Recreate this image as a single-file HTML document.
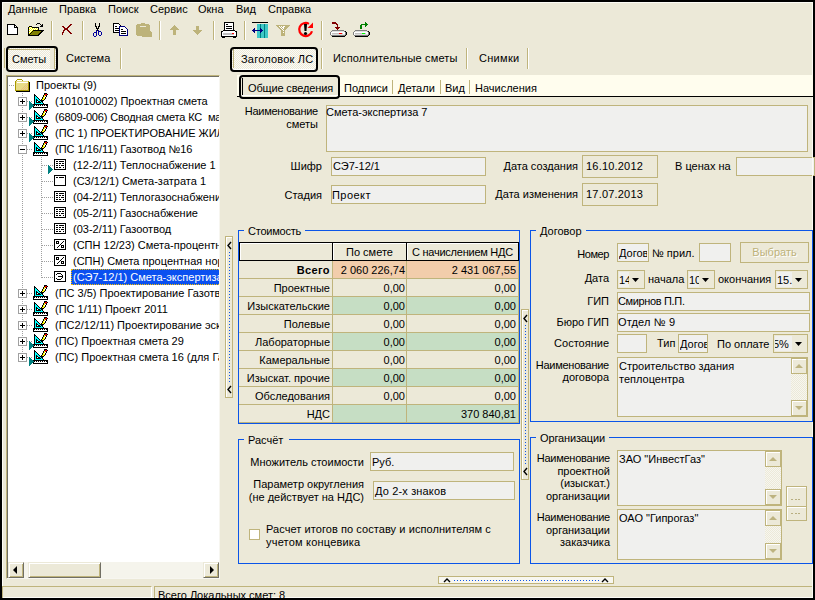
<!DOCTYPE html>
<html><head><meta charset="utf-8"><style>
html,body{margin:0;padding:0;width:815px;height:600px;overflow:hidden;background:#ECE9D8}
body div, body svg{position:absolute}
#root{position:relative;width:815px;height:600px;overflow:hidden;font-family:"Liberation Sans",sans-serif;font-size:11px;color:#000}
.t{position:absolute;white-space:nowrap;line-height:13px;height:13px}
svg{shape-rendering:geometricPrecision}
</style></head><body><div id="root">
<div style="left:0px;top:0px;width:815px;height:600px;background:#ECE9D8"></div>
<div style="left:2px;top:2px;width:811px;height:1px;background:#FCFBF5"></div>
<div style="left:2px;top:2px;width:1px;height:596px;background:#FCFBF5"></div>
<div style="left:812px;top:2px;width:1px;height:596px;background:#FCFBF5"></div>
<div style="left:2px;top:597px;width:811px;height:1px;background:#FCFBF5"></div>
<div style="left:0px;top:0px;width:815px;height:2px;background:#000"></div>
<div style="left:0px;top:598px;width:815px;height:2px;background:#000"></div>
<div style="left:0px;top:0px;width:2px;height:600px;background:#000"></div>
<div style="left:813px;top:0px;width:2px;height:600px;background:#000"></div>
<div class="t" style="left:8px;top:3px;">Данные</div>
<div class="t" style="left:59px;top:3px;">Правка</div>
<div class="t" style="left:108px;top:3px;">Поиск</div>
<div class="t" style="left:150px;top:3px;">Сервис</div>
<div class="t" style="left:198px;top:3px;">Окна</div>
<div class="t" style="left:236px;top:3px;">Вид</div>
<div class="t" style="left:268px;top:3px;">Справка</div>
<div style="left:51px;top:21px;width:1px;height:19px;background:#BFB47C"></div>
<div style="left:52px;top:21px;width:1px;height:19px;background:#FFFFFF"></div>
<div style="left:82px;top:21px;width:1px;height:19px;background:#BFB47C"></div>
<div style="left:83px;top:21px;width:1px;height:19px;background:#FFFFFF"></div>
<div style="left:159px;top:21px;width:1px;height:19px;background:#BFB47C"></div>
<div style="left:160px;top:21px;width:1px;height:19px;background:#FFFFFF"></div>
<div style="left:213px;top:21px;width:1px;height:19px;background:#BFB47C"></div>
<div style="left:214px;top:21px;width:1px;height:19px;background:#FFFFFF"></div>
<div style="left:244px;top:21px;width:1px;height:19px;background:#BFB47C"></div>
<div style="left:245px;top:21px;width:1px;height:19px;background:#FFFFFF"></div>
<div style="left:321px;top:21px;width:1px;height:19px;background:#BFB47C"></div>
<div style="left:322px;top:21px;width:1px;height:19px;background:#FFFFFF"></div>
<svg style="left:7px;top:24px" width="11" height="11" viewBox="0 0 11 11" shape-rendering="crispEdges"><rect x="0" y="0" width="8" height="1" fill="#000"/><rect x="0" y="1" width="1" height="1" fill="#000"/><rect x="1" y="1" width="6" height="1" fill="#fff"/><rect x="7" y="1" width="2" height="1" fill="#000"/><rect x="0" y="2" width="1" height="1" fill="#000"/><rect x="1" y="2" width="6" height="1" fill="#fff"/><rect x="7" y="2" width="1" height="1" fill="#000"/><rect x="8" y="2" width="1" height="1" fill="#fff"/><rect x="9" y="2" width="1" height="1" fill="#000"/><rect x="0" y="3" width="1" height="1" fill="#000"/><rect x="1" y="3" width="6" height="1" fill="#fff"/><rect x="7" y="3" width="4" height="1" fill="#000"/><rect x="0" y="4" width="1" height="1" fill="#000"/><rect x="1" y="4" width="9" height="1" fill="#fff"/><rect x="10" y="4" width="1" height="1" fill="#000"/><rect x="0" y="5" width="1" height="1" fill="#000"/><rect x="1" y="5" width="9" height="1" fill="#fff"/><rect x="10" y="5" width="1" height="1" fill="#000"/><rect x="0" y="6" width="1" height="1" fill="#000"/><rect x="1" y="6" width="9" height="1" fill="#fff"/><rect x="10" y="6" width="1" height="1" fill="#000"/><rect x="0" y="7" width="1" height="1" fill="#000"/><rect x="1" y="7" width="9" height="1" fill="#fff"/><rect x="10" y="7" width="1" height="1" fill="#000"/><rect x="0" y="8" width="1" height="1" fill="#000"/><rect x="1" y="8" width="9" height="1" fill="#fff"/><rect x="10" y="8" width="1" height="1" fill="#000"/><rect x="0" y="9" width="1" height="1" fill="#000"/><rect x="1" y="9" width="9" height="1" fill="#fff"/><rect x="10" y="9" width="1" height="1" fill="#000"/><rect x="0" y="10" width="11" height="1" fill="#000"/></svg>
<svg style="left:26px;top:23px" width="18" height="13" viewBox="0 0 18 13" shape-rendering="crispEdges"><rect x="11" y="0" width="3" height="1" fill="#000"/><rect x="10" y="1" width="1" height="1" fill="#000"/><rect x="14" y="1" width="1" height="1" fill="#000"/><rect x="16" y="1" width="1" height="1" fill="#000"/><rect x="15" y="2" width="2" height="1" fill="#000"/><rect x="3" y="3" width="3" height="1" fill="#000"/><rect x="14" y="3" width="3" height="1" fill="#000"/><rect x="2" y="4" width="1" height="1" fill="#000"/><rect x="3" y="4" width="1" height="1" fill="#FFFF00"/><rect x="4" y="4" width="1" height="1" fill="#fff"/><rect x="5" y="4" width="1" height="1" fill="#FFFF00"/><rect x="6" y="4" width="7" height="1" fill="#000"/><rect x="2" y="5" width="1" height="1" fill="#000"/><rect x="3" y="5" width="1" height="1" fill="#fff"/><rect x="4" y="5" width="1" height="1" fill="#FFFF00"/><rect x="5" y="5" width="1" height="1" fill="#fff"/><rect x="6" y="5" width="1" height="1" fill="#FFFF00"/><rect x="7" y="5" width="1" height="1" fill="#fff"/><rect x="8" y="5" width="1" height="1" fill="#FFFF00"/><rect x="9" y="5" width="1" height="1" fill="#fff"/><rect x="10" y="5" width="1" height="1" fill="#FFFF00"/><rect x="11" y="5" width="1" height="1" fill="#fff"/><rect x="12" y="5" width="1" height="1" fill="#000"/><rect x="2" y="6" width="1" height="1" fill="#000"/><rect x="3" y="6" width="1" height="1" fill="#FFFF00"/><rect x="4" y="6" width="1" height="1" fill="#fff"/><rect x="5" y="6" width="1" height="1" fill="#FFFF00"/><rect x="6" y="6" width="1" height="1" fill="#fff"/><rect x="7" y="6" width="1" height="1" fill="#FFFF00"/><rect x="8" y="6" width="1" height="1" fill="#fff"/><rect x="9" y="6" width="1" height="1" fill="#FFFF00"/><rect x="10" y="6" width="1" height="1" fill="#fff"/><rect x="11" y="6" width="1" height="1" fill="#FFFF00"/><rect x="12" y="6" width="1" height="1" fill="#000"/><rect x="2" y="7" width="1" height="1" fill="#000"/><rect x="3" y="7" width="1" height="1" fill="#fff"/><rect x="4" y="7" width="1" height="1" fill="#FFFF00"/><rect x="5" y="7" width="1" height="1" fill="#fff"/><rect x="6" y="7" width="1" height="1" fill="#FFFF00"/><rect x="7" y="7" width="11" height="1" fill="#000"/><rect x="2" y="8" width="1" height="1" fill="#000"/><rect x="3" y="8" width="1" height="1" fill="#FFFF00"/><rect x="4" y="8" width="1" height="1" fill="#fff"/><rect x="5" y="8" width="1" height="1" fill="#FFFF00"/><rect x="6" y="8" width="1" height="1" fill="#000"/><rect x="7" y="8" width="8" height="1" fill="#808000"/><rect x="15" y="8" width="2" height="1" fill="#000"/><rect x="2" y="9" width="1" height="1" fill="#000"/><rect x="3" y="9" width="1" height="1" fill="#fff"/><rect x="4" y="9" width="1" height="1" fill="#FFFF00"/><rect x="5" y="9" width="1" height="1" fill="#000"/><rect x="6" y="9" width="8" height="1" fill="#808000"/><rect x="14" y="9" width="2" height="1" fill="#000"/><rect x="2" y="10" width="1" height="1" fill="#000"/><rect x="3" y="10" width="1" height="1" fill="#FFFF00"/><rect x="4" y="10" width="1" height="1" fill="#000"/><rect x="5" y="10" width="8" height="1" fill="#808000"/><rect x="13" y="10" width="2" height="1" fill="#000"/><rect x="2" y="11" width="2" height="1" fill="#000"/><rect x="4" y="11" width="8" height="1" fill="#808000"/><rect x="12" y="11" width="2" height="1" fill="#000"/><rect x="2" y="12" width="11" height="1" fill="#000"/></svg>
<svg style="left:62px;top:24px" width="10" height="11" viewBox="0 0 10 11" shape-rendering="crispEdges"><rect x="8" y="0" width="2" height="1" fill="#800000"/><rect x="7" y="1" width="2" height="1" fill="#800000"/><rect x="0" y="2" width="2" height="1" fill="#800000"/><rect x="6" y="2" width="2" height="1" fill="#800000"/><rect x="1" y="3" width="2" height="1" fill="#800000"/><rect x="5" y="3" width="2" height="1" fill="#800000"/><rect x="2" y="4" width="4" height="1" fill="#800000"/><rect x="2" y="5" width="4" height="1" fill="#800000"/><rect x="1" y="6" width="2" height="1" fill="#800000"/><rect x="5" y="6" width="2" height="1" fill="#800000"/><rect x="1" y="7" width="1" height="1" fill="#800000"/><rect x="6" y="7" width="2" height="1" fill="#800000"/><rect x="0" y="8" width="2" height="1" fill="#800000"/><rect x="7" y="8" width="2" height="1" fill="#800000"/><rect x="0" y="9" width="1" height="1" fill="#800000"/><rect x="8" y="9" width="2" height="1" fill="#800000"/><rect x="0" y="10" width="1" height="1" fill="#800000"/></svg>
<svg style="left:93px;top:23px" width="9" height="14" viewBox="0 0 9 14" shape-rendering="crispEdges"><rect x="2" y="0" width="1" height="1" fill="#000"/><rect x="6" y="0" width="1" height="1" fill="#000"/><rect x="2" y="1" width="1" height="1" fill="#000"/><rect x="6" y="1" width="1" height="1" fill="#000"/><rect x="2" y="2" width="1" height="1" fill="#000"/><rect x="6" y="2" width="1" height="1" fill="#000"/><rect x="2" y="3" width="2" height="1" fill="#000"/><rect x="5" y="3" width="2" height="1" fill="#000"/><rect x="3" y="4" width="1" height="1" fill="#000"/><rect x="5" y="4" width="1" height="1" fill="#000"/><rect x="3" y="5" width="3" height="1" fill="#000"/><rect x="4" y="6" width="1" height="1" fill="#000"/><rect x="3" y="7" width="1" height="1" fill="#0000A0"/><rect x="4" y="7" width="1" height="1" fill="#000"/><rect x="5" y="7" width="1" height="1" fill="#0000A0"/><rect x="3" y="8" width="1" height="1" fill="#0000A0"/><rect x="5" y="8" width="3" height="1" fill="#0000A0"/><rect x="1" y="9" width="3" height="1" fill="#0000A0"/><rect x="5" y="9" width="1" height="1" fill="#0000A0"/><rect x="8" y="9" width="1" height="1" fill="#0000A0"/><rect x="0" y="10" width="1" height="1" fill="#0000A0"/><rect x="3" y="10" width="1" height="1" fill="#0000A0"/><rect x="5" y="10" width="1" height="1" fill="#0000A0"/><rect x="8" y="10" width="1" height="1" fill="#0000A0"/><rect x="0" y="11" width="1" height="1" fill="#0000A0"/><rect x="3" y="11" width="1" height="1" fill="#0000A0"/><rect x="5" y="11" width="1" height="1" fill="#0000A0"/><rect x="8" y="11" width="1" height="1" fill="#0000A0"/><rect x="0" y="12" width="1" height="1" fill="#0000A0"/><rect x="3" y="12" width="1" height="1" fill="#0000A0"/><rect x="6" y="12" width="2" height="1" fill="#0000A0"/><rect x="1" y="13" width="2" height="1" fill="#0000A0"/></svg>
<svg style="left:113px;top:23px" width="17" height="13" viewBox="0 0 17 13" shape-rendering="crispEdges"><rect x="0" y="0" width="6" height="1" fill="#000"/><rect x="0" y="1" width="1" height="1" fill="#000"/><rect x="1" y="1" width="5" height="1" fill="#fff"/><rect x="6" y="1" width="1" height="1" fill="#000"/><rect x="0" y="2" width="1" height="1" fill="#000"/><rect x="1" y="2" width="6" height="1" fill="#fff"/><rect x="7" y="2" width="1" height="1" fill="#000"/><rect x="0" y="3" width="1" height="1" fill="#000"/><rect x="1" y="3" width="1" height="1" fill="#fff"/><rect x="2" y="3" width="2" height="1" fill="#000"/><rect x="4" y="3" width="2" height="1" fill="#fff"/><rect x="6" y="3" width="6" height="1" fill="#000080"/><rect x="0" y="4" width="1" height="1" fill="#000"/><rect x="1" y="4" width="5" height="1" fill="#fff"/><rect x="6" y="4" width="1" height="1" fill="#000080"/><rect x="7" y="4" width="5" height="1" fill="#fff"/><rect x="12" y="4" width="1" height="1" fill="#000080"/><rect x="0" y="5" width="1" height="1" fill="#000"/><rect x="1" y="5" width="1" height="1" fill="#fff"/><rect x="2" y="5" width="4" height="1" fill="#000"/><rect x="6" y="5" width="1" height="1" fill="#000080"/><rect x="7" y="5" width="6" height="1" fill="#fff"/><rect x="13" y="5" width="1" height="1" fill="#000080"/><rect x="0" y="6" width="1" height="1" fill="#000"/><rect x="1" y="6" width="5" height="1" fill="#fff"/><rect x="6" y="6" width="1" height="1" fill="#000080"/><rect x="7" y="6" width="1" height="1" fill="#fff"/><rect x="8" y="6" width="2" height="1" fill="#000"/><rect x="10" y="6" width="4" height="1" fill="#fff"/><rect x="14" y="6" width="1" height="1" fill="#000080"/><rect x="0" y="7" width="1" height="1" fill="#000"/><rect x="1" y="7" width="1" height="1" fill="#fff"/><rect x="2" y="7" width="4" height="1" fill="#000"/><rect x="6" y="7" width="1" height="1" fill="#000080"/><rect x="7" y="7" width="7" height="1" fill="#fff"/><rect x="14" y="7" width="1" height="1" fill="#000080"/><rect x="0" y="8" width="1" height="1" fill="#000"/><rect x="1" y="8" width="5" height="1" fill="#fff"/><rect x="6" y="8" width="1" height="1" fill="#000080"/><rect x="7" y="8" width="1" height="1" fill="#fff"/><rect x="8" y="8" width="5" height="1" fill="#000"/><rect x="13" y="8" width="1" height="1" fill="#fff"/><rect x="14" y="8" width="1" height="1" fill="#000080"/><rect x="0" y="9" width="6" height="1" fill="#000"/><rect x="6" y="9" width="1" height="1" fill="#000080"/><rect x="7" y="9" width="7" height="1" fill="#fff"/><rect x="14" y="9" width="1" height="1" fill="#000080"/><rect x="6" y="10" width="1" height="1" fill="#000080"/><rect x="7" y="10" width="1" height="1" fill="#fff"/><rect x="8" y="10" width="5" height="1" fill="#000"/><rect x="13" y="10" width="1" height="1" fill="#fff"/><rect x="14" y="10" width="1" height="1" fill="#000080"/><rect x="6" y="11" width="1" height="1" fill="#000080"/><rect x="7" y="11" width="7" height="1" fill="#fff"/><rect x="14" y="11" width="1" height="1" fill="#000080"/><rect x="6" y="12" width="9" height="1" fill="#000080"/></svg>
<svg style="left:136px;top:23px" width="16" height="14" viewBox="0 0 16 14" shape-rendering="crispEdges"><rect x="5" y="0" width="4" height="1" fill="#BDB37A"/><rect x="1" y="1" width="12" height="1" fill="#BDB37A"/><rect x="0" y="2" width="14" height="1" fill="#BDB37A"/><rect x="0" y="3" width="4" height="1" fill="#BDB37A"/><rect x="4" y="3" width="6" height="1" fill="#ECE9D8"/><rect x="10" y="3" width="4" height="1" fill="#BDB37A"/><rect x="0" y="4" width="14" height="1" fill="#BDB37A"/><rect x="0" y="5" width="14" height="1" fill="#BDB37A"/><rect x="0" y="6" width="14" height="1" fill="#BDB37A"/><rect x="0" y="7" width="14" height="1" fill="#BDB37A"/><rect x="0" y="8" width="15" height="1" fill="#BDB37A"/><rect x="0" y="9" width="16" height="1" fill="#BDB37A"/><rect x="0" y="10" width="16" height="1" fill="#BDB37A"/><rect x="0" y="11" width="16" height="1" fill="#BDB37A"/><rect x="1" y="12" width="15" height="1" fill="#BDB37A"/><rect x="6" y="13" width="10" height="1" fill="#BDB37A"/></svg>
<svg style="left:170px;top:25px" width="9" height="10" viewBox="0 0 9 10" shape-rendering="crispEdges"><rect x="4" y="0" width="1" height="1" fill="#BDB37A"/><rect x="3" y="1" width="3" height="1" fill="#BDB37A"/><rect x="2" y="2" width="5" height="1" fill="#BDB37A"/><rect x="1" y="3" width="7" height="1" fill="#BDB37A"/><rect x="0" y="4" width="9" height="1" fill="#BDB37A"/><rect x="3" y="5" width="3" height="1" fill="#BDB37A"/><rect x="3" y="6" width="3" height="1" fill="#BDB37A"/><rect x="3" y="7" width="3" height="1" fill="#BDB37A"/><rect x="3" y="8" width="3" height="1" fill="#BDB37A"/><rect x="3" y="9" width="3" height="1" fill="#BDB37A"/></svg>
<svg style="left:193px;top:26px" width="9" height="9" viewBox="0 0 9 9" shape-rendering="crispEdges"><rect x="3" y="0" width="3" height="1" fill="#BDB37A"/><rect x="3" y="1" width="3" height="1" fill="#BDB37A"/><rect x="3" y="2" width="3" height="1" fill="#BDB37A"/><rect x="3" y="3" width="3" height="1" fill="#BDB37A"/><rect x="0" y="4" width="9" height="1" fill="#BDB37A"/><rect x="1" y="5" width="7" height="1" fill="#BDB37A"/><rect x="2" y="6" width="5" height="1" fill="#BDB37A"/><rect x="3" y="7" width="3" height="1" fill="#BDB37A"/><rect x="4" y="8" width="1" height="1" fill="#BDB37A"/></svg>
<svg style="left:221px;top:22px" width="16" height="16" viewBox="0 0 16 16" shape-rendering="crispEdges"><rect x="3" y="0" width="10" height="1" fill="#000"/><rect x="3" y="1" width="1" height="1" fill="#000"/><rect x="4" y="1" width="8" height="1" fill="#fff"/><rect x="12" y="1" width="1" height="1" fill="#000"/><rect x="3" y="2" width="1" height="1" fill="#000"/><rect x="4" y="2" width="1" height="1" fill="#fff"/><rect x="5" y="2" width="2" height="1" fill="#000"/><rect x="7" y="2" width="5" height="1" fill="#fff"/><rect x="12" y="2" width="1" height="1" fill="#000"/><rect x="3" y="3" width="1" height="1" fill="#000"/><rect x="4" y="3" width="8" height="1" fill="#fff"/><rect x="12" y="3" width="1" height="1" fill="#000"/><rect x="3" y="4" width="1" height="1" fill="#000"/><rect x="4" y="4" width="1" height="1" fill="#fff"/><rect x="5" y="4" width="6" height="1" fill="#000"/><rect x="11" y="4" width="1" height="1" fill="#fff"/><rect x="12" y="4" width="1" height="1" fill="#000"/><rect x="3" y="5" width="1" height="1" fill="#000"/><rect x="4" y="5" width="8" height="1" fill="#fff"/><rect x="12" y="5" width="1" height="1" fill="#000"/><rect x="3" y="6" width="1" height="1" fill="#000"/><rect x="4" y="6" width="1" height="1" fill="#fff"/><rect x="5" y="6" width="6" height="1" fill="#000"/><rect x="11" y="6" width="1" height="1" fill="#fff"/><rect x="12" y="6" width="1" height="1" fill="#000"/><rect x="3" y="7" width="1" height="1" fill="#000"/><rect x="4" y="7" width="8" height="1" fill="#fff"/><rect x="12" y="7" width="1" height="1" fill="#000"/><rect x="2" y="8" width="12" height="1" fill="#000"/><rect x="0" y="9" width="2" height="1" fill="#000"/><rect x="2" y="9" width="12" height="1" fill="#fff"/><rect x="14" y="9" width="2" height="1" fill="#000"/><rect x="0" y="10" width="1" height="1" fill="#000"/><rect x="1" y="10" width="14" height="1" fill="#fff"/><rect x="15" y="10" width="1" height="1" fill="#000"/><rect x="0" y="11" width="1" height="1" fill="#000"/><rect x="1" y="11" width="1" height="1" fill="#fff"/><rect x="2" y="11" width="9" height="1" fill="#C0C0C0"/><rect x="11" y="11" width="2" height="1" fill="#FF0000"/><rect x="13" y="11" width="2" height="1" fill="#fff"/><rect x="15" y="11" width="1" height="1" fill="#000"/><rect x="0" y="12" width="1" height="1" fill="#000"/><rect x="1" y="12" width="1" height="1" fill="#fff"/><rect x="2" y="12" width="11" height="1" fill="#C0C0C0"/><rect x="13" y="12" width="2" height="1" fill="#fff"/><rect x="15" y="12" width="1" height="1" fill="#000"/><rect x="0" y="13" width="1" height="1" fill="#000"/><rect x="1" y="13" width="14" height="1" fill="#fff"/><rect x="15" y="13" width="1" height="1" fill="#000"/><rect x="0" y="14" width="16" height="1" fill="#000"/><rect x="1" y="15" width="3" height="1" fill="#000"/><rect x="12" y="15" width="3" height="1" fill="#000"/></svg>
<svg style="left:252px;top:22px" width="16" height="16" viewBox="0 0 16 16" shape-rendering="crispEdges"><rect x="0" y="0" width="16" height="1" fill="#000"/><rect x="5" y="2" width="3" height="1" fill="#40C8C8"/><rect x="8" y="2" width="1" height="1" fill="#008080"/><rect x="9" y="2" width="3" height="1" fill="#40C8C8"/><rect x="12" y="2" width="1" height="1" fill="#008080"/><rect x="13" y="2" width="3" height="1" fill="#40C8C8"/><rect x="5" y="3" width="3" height="1" fill="#40C8C8"/><rect x="8" y="3" width="1" height="1" fill="#008080"/><rect x="9" y="3" width="3" height="1" fill="#40C8C8"/><rect x="12" y="3" width="1" height="1" fill="#008080"/><rect x="13" y="3" width="3" height="1" fill="#40C8C8"/><rect x="5" y="4" width="3" height="1" fill="#40C8C8"/><rect x="8" y="4" width="1" height="1" fill="#008080"/><rect x="9" y="4" width="3" height="1" fill="#40C8C8"/><rect x="12" y="4" width="1" height="1" fill="#008080"/><rect x="13" y="4" width="3" height="1" fill="#40C8C8"/><rect x="5" y="5" width="3" height="1" fill="#40C8C8"/><rect x="8" y="5" width="1" height="1" fill="#008080"/><rect x="9" y="5" width="3" height="1" fill="#40C8C8"/><rect x="12" y="5" width="1" height="1" fill="#008080"/><rect x="13" y="5" width="3" height="1" fill="#40C8C8"/><rect x="2" y="6" width="1" height="1" fill="#000080"/><rect x="5" y="6" width="3" height="1" fill="#40C8C8"/><rect x="8" y="6" width="1" height="1" fill="#000080"/><rect x="9" y="6" width="3" height="1" fill="#40C8C8"/><rect x="12" y="6" width="1" height="1" fill="#008080"/><rect x="13" y="6" width="3" height="1" fill="#40C8C8"/><rect x="1" y="7" width="2" height="1" fill="#000080"/><rect x="5" y="7" width="3" height="1" fill="#40C8C8"/><rect x="8" y="7" width="2" height="1" fill="#000080"/><rect x="10" y="7" width="2" height="1" fill="#40C8C8"/><rect x="12" y="7" width="1" height="1" fill="#008080"/><rect x="13" y="7" width="3" height="1" fill="#40C8C8"/><rect x="0" y="8" width="11" height="1" fill="#000080"/><rect x="11" y="8" width="1" height="1" fill="#40C8C8"/><rect x="12" y="8" width="1" height="1" fill="#008080"/><rect x="13" y="8" width="3" height="1" fill="#40C8C8"/><rect x="1" y="9" width="2" height="1" fill="#000080"/><rect x="5" y="9" width="3" height="1" fill="#40C8C8"/><rect x="8" y="9" width="2" height="1" fill="#000080"/><rect x="10" y="9" width="2" height="1" fill="#40C8C8"/><rect x="12" y="9" width="1" height="1" fill="#008080"/><rect x="13" y="9" width="3" height="1" fill="#40C8C8"/><rect x="2" y="10" width="1" height="1" fill="#000080"/><rect x="5" y="10" width="3" height="1" fill="#40C8C8"/><rect x="8" y="10" width="1" height="1" fill="#000080"/><rect x="9" y="10" width="3" height="1" fill="#40C8C8"/><rect x="12" y="10" width="1" height="1" fill="#008080"/><rect x="13" y="10" width="3" height="1" fill="#40C8C8"/><rect x="5" y="11" width="3" height="1" fill="#40C8C8"/><rect x="8" y="11" width="1" height="1" fill="#008080"/><rect x="9" y="11" width="3" height="1" fill="#40C8C8"/><rect x="12" y="11" width="1" height="1" fill="#008080"/><rect x="13" y="11" width="3" height="1" fill="#40C8C8"/><rect x="5" y="12" width="3" height="1" fill="#40C8C8"/><rect x="8" y="12" width="1" height="1" fill="#008080"/><rect x="9" y="12" width="3" height="1" fill="#40C8C8"/><rect x="12" y="12" width="1" height="1" fill="#008080"/><rect x="13" y="12" width="3" height="1" fill="#40C8C8"/><rect x="5" y="13" width="3" height="1" fill="#40C8C8"/><rect x="8" y="13" width="1" height="1" fill="#008080"/><rect x="9" y="13" width="3" height="1" fill="#40C8C8"/><rect x="12" y="13" width="1" height="1" fill="#008080"/><rect x="13" y="13" width="3" height="1" fill="#40C8C8"/><rect x="5" y="14" width="3" height="1" fill="#40C8C8"/><rect x="8" y="14" width="1" height="1" fill="#008080"/><rect x="9" y="14" width="3" height="1" fill="#40C8C8"/><rect x="12" y="14" width="1" height="1" fill="#008080"/><rect x="13" y="14" width="3" height="1" fill="#40C8C8"/><rect x="5" y="15" width="3" height="1" fill="#40C8C8"/><rect x="8" y="15" width="1" height="1" fill="#008080"/><rect x="9" y="15" width="3" height="1" fill="#40C8C8"/><rect x="12" y="15" width="1" height="1" fill="#008080"/><rect x="13" y="15" width="3" height="1" fill="#40C8C8"/></svg>
<svg style="left:276px;top:25px" width="14" height="11" viewBox="0 0 14 11" shape-rendering="crispEdges"><rect x="0" y="0" width="14" height="1" fill="#BDB37A"/><rect x="1" y="1" width="2" height="1" fill="#BDB37A"/><rect x="3" y="1" width="1" height="1" fill="#fff"/><rect x="4" y="1" width="1" height="1" fill="#BDB37A"/><rect x="5" y="1" width="1" height="1" fill="#fff"/><rect x="6" y="1" width="1" height="1" fill="#BDB37A"/><rect x="7" y="1" width="2" height="1" fill="#fff"/><rect x="9" y="1" width="4" height="1" fill="#BDB37A"/><rect x="2" y="2" width="2" height="1" fill="#BDB37A"/><rect x="4" y="2" width="1" height="1" fill="#fff"/><rect x="5" y="2" width="1" height="1" fill="#BDB37A"/><rect x="6" y="2" width="2" height="1" fill="#fff"/><rect x="8" y="2" width="4" height="1" fill="#BDB37A"/><rect x="3" y="3" width="2" height="1" fill="#BDB37A"/><rect x="5" y="3" width="1" height="1" fill="#fff"/><rect x="6" y="3" width="1" height="1" fill="#BDB37A"/><rect x="7" y="3" width="1" height="1" fill="#fff"/><rect x="8" y="3" width="3" height="1" fill="#BDB37A"/><rect x="4" y="4" width="2" height="1" fill="#BDB37A"/><rect x="6" y="4" width="1" height="1" fill="#fff"/><rect x="7" y="4" width="3" height="1" fill="#BDB37A"/><rect x="5" y="5" width="2" height="1" fill="#BDB37A"/><rect x="7" y="5" width="1" height="1" fill="#fff"/><rect x="8" y="5" width="1" height="1" fill="#BDB37A"/><rect x="5" y="6" width="4" height="1" fill="#BDB37A"/><rect x="5" y="7" width="2" height="1" fill="#BDB37A"/><rect x="7" y="7" width="1" height="1" fill="#fff"/><rect x="8" y="7" width="1" height="1" fill="#BDB37A"/><rect x="5" y="8" width="4" height="1" fill="#BDB37A"/><rect x="5" y="9" width="4" height="1" fill="#BDB37A"/><rect x="5" y="10" width="4" height="1" fill="#BDB37A"/></svg>
<svg style="left:296px;top:20px" width="20" height="20" viewBox="0 0 20 20"><path d="M15.98 11.18A6.5 6.5 0 1 1 12.95 3.87" fill="none" stroke="#f00" stroke-width="2.2"/><path d="M17 2.5v5.5h-5.5z" fill="#f00"/><path d="M8 4h3l-0.5 7h-2z" fill="#000"/><circle cx="9.5" cy="13.5" r="1.6" fill="#000"/></svg>
<svg style="left:330px;top:22px" width="17" height="15" viewBox="0 0 17 15" shape-rendering="crispEdges"><rect x="2" y="0" width="4" height="1" fill="#800000"/><rect x="2" y="1" width="5" height="1" fill="#800000"/><rect x="6" y="2" width="2" height="1" fill="#800000"/><rect x="7" y="3" width="1" height="1" fill="#800000"/><rect x="7" y="4" width="1" height="1" fill="#800000"/><rect x="5" y="5" width="5" height="1" fill="#800000"/><rect x="6" y="6" width="3" height="1" fill="#800000"/><rect x="7" y="7" width="1" height="1" fill="#800000"/><rect x="2" y="8" width="12" height="1" fill="#808080"/><rect x="1" y="9" width="1" height="1" fill="#808080"/><rect x="2" y="9" width="12" height="1" fill="#E0E0E0"/><rect x="14" y="9" width="1" height="1" fill="#808080"/><rect x="15" y="9" width="1" height="1" fill="#000"/><rect x="0" y="10" width="1" height="1" fill="#808080"/><rect x="1" y="10" width="14" height="1" fill="#fff"/><rect x="15" y="10" width="1" height="1" fill="#808080"/><rect x="16" y="10" width="1" height="1" fill="#000"/><rect x="0" y="11" width="1" height="1" fill="#808080"/><rect x="1" y="11" width="1" height="1" fill="#fff"/><rect x="2" y="11" width="7" height="1" fill="#C0C0C0"/><rect x="9" y="11" width="3" height="1" fill="#FF0000"/><rect x="12" y="11" width="1" height="1" fill="#C0C0C0"/><rect x="13" y="11" width="2" height="1" fill="#fff"/><rect x="15" y="11" width="1" height="1" fill="#808080"/><rect x="16" y="11" width="1" height="1" fill="#000"/><rect x="0" y="12" width="1" height="1" fill="#808080"/><rect x="1" y="12" width="1" height="1" fill="#fff"/><rect x="2" y="12" width="13" height="1" fill="#E0E0E0"/><rect x="15" y="12" width="1" height="1" fill="#808080"/><rect x="16" y="12" width="1" height="1" fill="#000"/><rect x="1" y="13" width="14" height="1" fill="#808080"/><rect x="15" y="13" width="1" height="1" fill="#000"/><rect x="2" y="14" width="13" height="1" fill="#000"/></svg>
<svg style="left:353px;top:22px" width="18" height="15" viewBox="0 0 18 15" shape-rendering="crispEdges"><rect x="12" y="0" width="1" height="1" fill="#008000"/><rect x="12" y="1" width="2" height="1" fill="#008000"/><rect x="8" y="2" width="7" height="1" fill="#008000"/><rect x="7" y="3" width="2" height="1" fill="#008000"/><rect x="12" y="3" width="2" height="1" fill="#008000"/><rect x="7" y="4" width="2" height="1" fill="#008000"/><rect x="12" y="4" width="1" height="1" fill="#008000"/><rect x="7" y="5" width="2" height="1" fill="#008000"/><rect x="7" y="6" width="2" height="1" fill="#008000"/><rect x="2" y="8" width="12" height="1" fill="#808080"/><rect x="1" y="9" width="1" height="1" fill="#808080"/><rect x="2" y="9" width="12" height="1" fill="#E0E0E0"/><rect x="14" y="9" width="1" height="1" fill="#808080"/><rect x="15" y="9" width="1" height="1" fill="#000"/><rect x="0" y="10" width="1" height="1" fill="#808080"/><rect x="1" y="10" width="14" height="1" fill="#fff"/><rect x="15" y="10" width="1" height="1" fill="#808080"/><rect x="16" y="10" width="1" height="1" fill="#000"/><rect x="0" y="11" width="1" height="1" fill="#808080"/><rect x="1" y="11" width="1" height="1" fill="#fff"/><rect x="2" y="11" width="7" height="1" fill="#C0C0C0"/><rect x="9" y="11" width="3" height="1" fill="#00FF00"/><rect x="12" y="11" width="1" height="1" fill="#C0C0C0"/><rect x="13" y="11" width="2" height="1" fill="#fff"/><rect x="15" y="11" width="1" height="1" fill="#808080"/><rect x="16" y="11" width="1" height="1" fill="#000"/><rect x="0" y="12" width="1" height="1" fill="#808080"/><rect x="1" y="12" width="1" height="1" fill="#fff"/><rect x="2" y="12" width="13" height="1" fill="#E0E0E0"/><rect x="15" y="12" width="1" height="1" fill="#808080"/><rect x="16" y="12" width="1" height="1" fill="#000"/><rect x="1" y="13" width="14" height="1" fill="#808080"/><rect x="15" y="13" width="1" height="1" fill="#000"/><rect x="2" y="14" width="13" height="1" fill="#000"/></svg>
<div style="left:8px;top:48px;width:48px;height:22px;background:repeating-conic-gradient(#ECE9D8 0 25%, #FCFBF6 0 50%) 0 0/2px 2px"></div>
<div style="left:8px;top:69px;width:48px;height:1px;background:#fff"></div>
<div style="left:8px;top:49px;width:42px;height:1px;background:#BFB47C"></div>
<div style="left:50px;top:48px;width:4px;height:21px;background:#ECE9D8"></div>
<div style="left:54px;top:48px;width:1px;height:21px;background:#BFB47C"></div>
<div style="left:6px;top:46px;width:52px;height:26px;border:2px solid #000;border-radius:4px;box-sizing:border-box"></div>
<div style="left:4px;top:48px;width:1px;height:20px;background:#BFB47C"></div>
<div class="t" style="left:12px;top:53px;">Сметы</div>
<div class="t" style="left:66px;top:52px;">Система</div>
<div style="left:120px;top:48px;width:1px;height:21px;background:#BFB47C"></div>
<div style="left:121px;top:48px;width:1px;height:21px;background:#FFFFFF"></div>
<div style="left:232px;top:49px;width:84px;height:21px;background:repeating-conic-gradient(#ECE9D8 0 25%, #FCFBF6 0 50%) 0 0/2px 2px"></div>
<div style="left:232px;top:69px;width:84px;height:1px;background:#fff"></div>
<div style="left:233px;top:49px;width:1px;height:19px;background:#BFB47C"></div>
<div style="left:230px;top:47px;width:88px;height:25px;border:2px solid #000;border-radius:4px;box-sizing:border-box"></div>
<div class="t" style="left:241px;top:53px;letter-spacing:0.2px">Заголовок ЛС</div>
<div style="left:321px;top:48px;width:1px;height:21px;background:#BFB47C"></div>
<div style="left:322px;top:48px;width:1px;height:21px;background:#FFFFFF"></div>
<div class="t" style="left:333px;top:52px;letter-spacing:0.15px">Исполнительные сметы</div>
<div style="left:466px;top:48px;width:1px;height:21px;background:#BFB47C"></div>
<div style="left:467px;top:48px;width:1px;height:21px;background:#FFFFFF"></div>
<div class="t" style="left:479px;top:52px;letter-spacing:0.3px">Снимки</div>
<div style="left:527px;top:48px;width:1px;height:21px;background:#BFB47C"></div>
<div style="left:528px;top:48px;width:1px;height:21px;background:#FFFFFF"></div>
<div style="left:237px;top:75px;width:576px;height:21px;background:#FFFDEE"></div>
<div style="left:237px;top:96px;width:576px;height:1px;background:#000"></div>
<div style="left:239px;top:75px;width:101px;height:24px;border:2px solid #000;border-radius:4px;box-sizing:border-box;background:#ECE9D8"></div>
<div style="left:242px;top:78px;width:1px;height:18px;background:#000"></div>
<div style="left:242px;top:95px;width:96px;height:1px;background:#fff"></div>
<div class="t" style="left:248px;top:82px;letter-spacing:-0.15px">Общие сведения</div>
<div class="t" style="left:344px;top:82px;">Подписи</div>
<div style="left:392px;top:80px;width:1px;height:14px;background:#BFB47C"></div>
<div class="t" style="left:398px;top:82px;">Детали</div>
<div style="left:440px;top:80px;width:1px;height:14px;background:#BFB47C"></div>
<div class="t" style="left:445px;top:82px;">Вид</div>
<div style="left:469px;top:80px;width:1px;height:14px;background:#BFB47C"></div>
<div class="t" style="left:475px;top:82px;">Начисления</div>
<div style="left:6px;top:75px;width:214px;height:504px;background:#fff;border-top:1px solid #BFB47C;border-left:1px solid #BFB47C;border-right:1px solid #F7F6F0;border-bottom:1px solid #F7F6F0;box-sizing:border-box"></div>
<div style="left:7px;top:76px;width:212px;height:1px;background:#716F64"></div>
<div style="left:7px;top:76px;width:1px;height:502px;background:#716F64"></div>
<div style="left:8px;top:77px;width:211px;height:485px;overflow:hidden">
<div style="left:1px;top:8px;width:6px;height:1px;background:repeating-linear-gradient(to right,#A0A0A0 0 1px,transparent 1px 2px)"></div>
<div style="left:14px;top:16px;width:1px;height:265px;background:repeating-linear-gradient(to bottom,#A0A0A0 0 1px,transparent 1px 2px)"></div>
<div style="left:33px;top:80px;width:1px;height:121px;background:repeating-linear-gradient(to bottom,#A0A0A0 0 1px,transparent 1px 2px)"></div>
<svg style="left:7px;top:2px" width="15" height="13" viewBox="0 0 15 13"><rect x="2" y="0" width="5" height="1" fill="#A89800"/><rect x="1" y="1" width="1" height="1" fill="#A89800"/><rect x="2" y="1" width="5" height="1" fill="#fff"/><rect x="7" y="1" width="1" height="1" fill="#A89800"/><rect x="0" y="2" width="1" height="1" fill="#A89800"/><rect x="1" y="2" width="12" height="1" fill="#E8DC88"/><rect x="13" y="2" width="1" height="1" fill="#A89800"/><rect x="0" y="3" width="1" height="1" fill="#A89800"/><rect x="1" y="3" width="1" height="1" fill="#E8DC88"/><rect x="2" y="3" width="11" height="1" fill="#fff"/><rect x="13" y="3" width="1" height="1" fill="#A89800"/><rect x="14" y="3" width="1" height="1" fill="#000"/><rect x="0" y="4" width="1" height="1" fill="#A89800"/><rect x="1" y="4" width="11" height="1" fill="#E8DC88"/><rect x="12" y="4" width="1" height="1" fill="#E8C080"/><rect x="13" y="4" width="1" height="1" fill="#A89800"/><rect x="14" y="4" width="1" height="1" fill="#000"/><rect x="0" y="5" width="1" height="1" fill="#A89800"/><rect x="1" y="5" width="10" height="1" fill="#E8DC88"/><rect x="11" y="5" width="1" height="1" fill="#E8C080"/><rect x="12" y="5" width="1" height="1" fill="#E8DC88"/><rect x="13" y="5" width="1" height="1" fill="#A89800"/><rect x="14" y="5" width="1" height="1" fill="#000"/><rect x="0" y="6" width="1" height="1" fill="#A89800"/><rect x="1" y="6" width="9" height="1" fill="#E8DC88"/><rect x="10" y="6" width="1" height="1" fill="#E8C080"/><rect x="11" y="6" width="1" height="1" fill="#E8DC88"/><rect x="12" y="6" width="1" height="1" fill="#E8C080"/><rect x="13" y="6" width="1" height="1" fill="#A89800"/><rect x="14" y="6" width="1" height="1" fill="#000"/><rect x="0" y="7" width="1" height="1" fill="#A89800"/><rect x="1" y="7" width="8" height="1" fill="#E8DC88"/><rect x="9" y="7" width="1" height="1" fill="#E8C080"/><rect x="10" y="7" width="1" height="1" fill="#E8DC88"/><rect x="11" y="7" width="1" height="1" fill="#E8C080"/><rect x="12" y="7" width="1" height="1" fill="#E8DC88"/><rect x="13" y="7" width="1" height="1" fill="#A89800"/><rect x="14" y="7" width="1" height="1" fill="#000"/><rect x="0" y="8" width="1" height="1" fill="#A89800"/><rect x="1" y="8" width="7" height="1" fill="#E8DC88"/><rect x="8" y="8" width="1" height="1" fill="#E8C080"/><rect x="9" y="8" width="1" height="1" fill="#E8DC88"/><rect x="10" y="8" width="1" height="1" fill="#E8C080"/><rect x="11" y="8" width="1" height="1" fill="#E8DC88"/><rect x="12" y="8" width="1" height="1" fill="#E8C080"/><rect x="13" y="8" width="1" height="1" fill="#A89800"/><rect x="14" y="8" width="1" height="1" fill="#000"/><rect x="0" y="9" width="1" height="1" fill="#A89800"/><rect x="1" y="9" width="6" height="1" fill="#E8DC88"/><rect x="7" y="9" width="1" height="1" fill="#E8C080"/><rect x="8" y="9" width="1" height="1" fill="#E8DC88"/><rect x="9" y="9" width="1" height="1" fill="#E8C080"/><rect x="10" y="9" width="1" height="1" fill="#E8DC88"/><rect x="11" y="9" width="1" height="1" fill="#E8C080"/><rect x="12" y="9" width="1" height="1" fill="#E8DC88"/><rect x="13" y="9" width="1" height="1" fill="#A89800"/><rect x="14" y="9" width="1" height="1" fill="#000"/><rect x="0" y="10" width="1" height="1" fill="#A89800"/><rect x="1" y="10" width="5" height="1" fill="#E8DC88"/><rect x="6" y="10" width="1" height="1" fill="#E8C080"/><rect x="7" y="10" width="1" height="1" fill="#E8DC88"/><rect x="8" y="10" width="1" height="1" fill="#E8C080"/><rect x="9" y="10" width="1" height="1" fill="#E8DC88"/><rect x="10" y="10" width="1" height="1" fill="#E8C080"/><rect x="11" y="10" width="1" height="1" fill="#E8DC88"/><rect x="12" y="10" width="1" height="1" fill="#E8C080"/><rect x="13" y="10" width="1" height="1" fill="#A89800"/><rect x="14" y="10" width="1" height="1" fill="#000"/><rect x="0" y="11" width="14" height="1" fill="#A89800"/><rect x="14" y="11" width="1" height="1" fill="#000"/><rect x="1" y="12" width="14" height="1" fill="#000"/></svg>
<div class="t" style="left:28px;top:2px;">Проекты (9)</div>
<div style="left:15px;top:24px;width:10px;height:1px;background:repeating-linear-gradient(to right,#A0A0A0 0 1px,transparent 1px 2px)"></div>
<svg style="left:10px;top:20px" width="9" height="9" viewBox="0 0 9 9"><rect x="0.5" y="0.5" width="8" height="8" fill="#fff" stroke="#A0A0A0"/><path d="M2 4.5h5" stroke="#000"/><path d="M4.5 2v5" stroke="#000"/></svg>
<svg style="left:24px;top:16px" width="16" height="15" viewBox="0 0 16 15"><rect x="12" y="0" width="3" height="1" fill="#000"/><rect x="2" y="1" width="1" height="1" fill="#000"/><rect x="12" y="1" width="1" height="1" fill="#000"/><rect x="13" y="1" width="2" height="1" fill="#FF0000"/><rect x="15" y="1" width="1" height="1" fill="#000"/><rect x="2" y="2" width="2" height="1" fill="#000"/><rect x="11" y="2" width="1" height="1" fill="#000"/><rect x="12" y="2" width="1" height="1" fill="#FFFF00"/><rect x="13" y="2" width="1" height="1" fill="#FF0000"/><rect x="14" y="2" width="1" height="1" fill="#000"/><rect x="2" y="3" width="1" height="1" fill="#000"/><rect x="3" y="3" width="1" height="1" fill="#00FFFF"/><rect x="4" y="3" width="1" height="1" fill="#000"/><rect x="11" y="3" width="1" height="1" fill="#000"/><rect x="12" y="3" width="1" height="1" fill="#FFFF00"/><rect x="13" y="3" width="1" height="1" fill="#fff"/><rect x="14" y="3" width="1" height="1" fill="#000"/><rect x="2" y="4" width="1" height="1" fill="#000"/><rect x="3" y="4" width="2" height="1" fill="#00FFFF"/><rect x="5" y="4" width="1" height="1" fill="#000"/><rect x="10" y="4" width="1" height="1" fill="#000"/><rect x="11" y="4" width="1" height="1" fill="#FFFF00"/><rect x="12" y="4" width="1" height="1" fill="#fff"/><rect x="13" y="4" width="1" height="1" fill="#000"/><rect x="2" y="5" width="1" height="1" fill="#000"/><rect x="3" y="5" width="3" height="1" fill="#00FFFF"/><rect x="6" y="5" width="1" height="1" fill="#000"/><rect x="10" y="5" width="1" height="1" fill="#000"/><rect x="11" y="5" width="2" height="1" fill="#FFFF00"/><rect x="13" y="5" width="1" height="1" fill="#000"/><rect x="2" y="6" width="1" height="1" fill="#000"/><rect x="3" y="6" width="1" height="1" fill="#00FFFF"/><rect x="4" y="6" width="1" height="1" fill="#000"/><rect x="5" y="6" width="2" height="1" fill="#00FFFF"/><rect x="7" y="6" width="1" height="1" fill="#000"/><rect x="9" y="6" width="1" height="1" fill="#000"/><rect x="10" y="6" width="2" height="1" fill="#FFFF00"/><rect x="12" y="6" width="1" height="1" fill="#000"/><rect x="2" y="7" width="1" height="1" fill="#000"/><rect x="3" y="7" width="1" height="1" fill="#00FFFF"/><rect x="4" y="7" width="2" height="1" fill="#000"/><rect x="6" y="7" width="2" height="1" fill="#00FFFF"/><rect x="8" y="7" width="4" height="1" fill="#000"/><rect x="2" y="8" width="1" height="1" fill="#000"/><rect x="3" y="8" width="1" height="1" fill="#00FFFF"/><rect x="4" y="8" width="1" height="1" fill="#000"/><rect x="5" y="8" width="1" height="1" fill="#fff"/><rect x="6" y="8" width="2" height="1" fill="#000"/><rect x="8" y="8" width="1" height="1" fill="#00FFFF"/><rect x="9" y="8" width="2" height="1" fill="#000"/><rect x="2" y="9" width="1" height="1" fill="#000"/><rect x="3" y="9" width="1" height="1" fill="#00FFFF"/><rect x="4" y="9" width="5" height="1" fill="#000"/><rect x="9" y="9" width="1" height="1" fill="#00FFFF"/><rect x="10" y="9" width="1" height="1" fill="#000"/><rect x="2" y="10" width="1" height="1" fill="#000"/><rect x="3" y="10" width="8" height="1" fill="#00FFFF"/><rect x="11" y="10" width="1" height="1" fill="#000"/><rect x="1" y="11" width="15" height="1" fill="#000"/><rect x="1" y="12" width="2" height="1" fill="#000"/><rect x="3" y="12" width="1" height="1" fill="#fff"/><rect x="4" y="12" width="1" height="1" fill="#000"/><rect x="5" y="12" width="1" height="1" fill="#fff"/><rect x="6" y="12" width="1" height="1" fill="#000"/><rect x="7" y="12" width="1" height="1" fill="#fff"/><rect x="8" y="12" width="1" height="1" fill="#000"/><rect x="9" y="12" width="1" height="1" fill="#fff"/><rect x="10" y="12" width="1" height="1" fill="#000"/><rect x="11" y="12" width="1" height="1" fill="#fff"/><rect x="12" y="12" width="1" height="1" fill="#000"/><rect x="13" y="12" width="1" height="1" fill="#fff"/><rect x="14" y="12" width="2" height="1" fill="#000"/><rect x="1" y="13" width="1" height="1" fill="#000"/><rect x="2" y="13" width="13" height="1" fill="#fff"/><rect x="15" y="13" width="1" height="1" fill="#000"/><rect x="1" y="14" width="15" height="1" fill="#000"/></svg>
<svg style="left:21px;top:24px" width="5" height="9" viewBox="0 0 5 9"><rect x="0" y="0" width="1" height="1" fill="#008080"/><rect x="0" y="1" width="2" height="1" fill="#008080"/><rect x="0" y="2" width="3" height="1" fill="#008080"/><rect x="0" y="3" width="4" height="1" fill="#008080"/><rect x="0" y="4" width="5" height="1" fill="#008080"/><rect x="0" y="5" width="4" height="1" fill="#008080"/><rect x="0" y="6" width="3" height="1" fill="#008080"/><rect x="0" y="7" width="2" height="1" fill="#008080"/><rect x="0" y="8" width="1" height="1" fill="#008080"/></svg>
<div class="t" style="left:47px;top:18px;">(101010002) Проектная смета</div>
<div style="left:15px;top:40px;width:10px;height:1px;background:repeating-linear-gradient(to right,#A0A0A0 0 1px,transparent 1px 2px)"></div>
<svg style="left:10px;top:36px" width="9" height="9" viewBox="0 0 9 9"><rect x="0.5" y="0.5" width="8" height="8" fill="#fff" stroke="#A0A0A0"/><path d="M2 4.5h5" stroke="#000"/><path d="M4.5 2v5" stroke="#000"/></svg>
<svg style="left:24px;top:32px" width="16" height="15" viewBox="0 0 16 15"><rect x="12" y="0" width="3" height="1" fill="#000"/><rect x="2" y="1" width="1" height="1" fill="#000"/><rect x="12" y="1" width="1" height="1" fill="#000"/><rect x="13" y="1" width="2" height="1" fill="#FF0000"/><rect x="15" y="1" width="1" height="1" fill="#000"/><rect x="2" y="2" width="2" height="1" fill="#000"/><rect x="11" y="2" width="1" height="1" fill="#000"/><rect x="12" y="2" width="1" height="1" fill="#FFFF00"/><rect x="13" y="2" width="1" height="1" fill="#FF0000"/><rect x="14" y="2" width="1" height="1" fill="#000"/><rect x="2" y="3" width="1" height="1" fill="#000"/><rect x="3" y="3" width="1" height="1" fill="#00FFFF"/><rect x="4" y="3" width="1" height="1" fill="#000"/><rect x="11" y="3" width="1" height="1" fill="#000"/><rect x="12" y="3" width="1" height="1" fill="#FFFF00"/><rect x="13" y="3" width="1" height="1" fill="#fff"/><rect x="14" y="3" width="1" height="1" fill="#000"/><rect x="2" y="4" width="1" height="1" fill="#000"/><rect x="3" y="4" width="2" height="1" fill="#00FFFF"/><rect x="5" y="4" width="1" height="1" fill="#000"/><rect x="10" y="4" width="1" height="1" fill="#000"/><rect x="11" y="4" width="1" height="1" fill="#FFFF00"/><rect x="12" y="4" width="1" height="1" fill="#fff"/><rect x="13" y="4" width="1" height="1" fill="#000"/><rect x="2" y="5" width="1" height="1" fill="#000"/><rect x="3" y="5" width="3" height="1" fill="#00FFFF"/><rect x="6" y="5" width="1" height="1" fill="#000"/><rect x="10" y="5" width="1" height="1" fill="#000"/><rect x="11" y="5" width="2" height="1" fill="#FFFF00"/><rect x="13" y="5" width="1" height="1" fill="#000"/><rect x="2" y="6" width="1" height="1" fill="#000"/><rect x="3" y="6" width="1" height="1" fill="#00FFFF"/><rect x="4" y="6" width="1" height="1" fill="#000"/><rect x="5" y="6" width="2" height="1" fill="#00FFFF"/><rect x="7" y="6" width="1" height="1" fill="#000"/><rect x="9" y="6" width="1" height="1" fill="#000"/><rect x="10" y="6" width="2" height="1" fill="#FFFF00"/><rect x="12" y="6" width="1" height="1" fill="#000"/><rect x="2" y="7" width="1" height="1" fill="#000"/><rect x="3" y="7" width="1" height="1" fill="#00FFFF"/><rect x="4" y="7" width="2" height="1" fill="#000"/><rect x="6" y="7" width="2" height="1" fill="#00FFFF"/><rect x="8" y="7" width="4" height="1" fill="#000"/><rect x="2" y="8" width="1" height="1" fill="#000"/><rect x="3" y="8" width="1" height="1" fill="#00FFFF"/><rect x="4" y="8" width="1" height="1" fill="#000"/><rect x="5" y="8" width="1" height="1" fill="#fff"/><rect x="6" y="8" width="2" height="1" fill="#000"/><rect x="8" y="8" width="1" height="1" fill="#00FFFF"/><rect x="9" y="8" width="2" height="1" fill="#000"/><rect x="2" y="9" width="1" height="1" fill="#000"/><rect x="3" y="9" width="1" height="1" fill="#00FFFF"/><rect x="4" y="9" width="5" height="1" fill="#000"/><rect x="9" y="9" width="1" height="1" fill="#00FFFF"/><rect x="10" y="9" width="1" height="1" fill="#000"/><rect x="2" y="10" width="1" height="1" fill="#000"/><rect x="3" y="10" width="8" height="1" fill="#00FFFF"/><rect x="11" y="10" width="1" height="1" fill="#000"/><rect x="1" y="11" width="15" height="1" fill="#000"/><rect x="1" y="12" width="2" height="1" fill="#000"/><rect x="3" y="12" width="1" height="1" fill="#fff"/><rect x="4" y="12" width="1" height="1" fill="#000"/><rect x="5" y="12" width="1" height="1" fill="#fff"/><rect x="6" y="12" width="1" height="1" fill="#000"/><rect x="7" y="12" width="1" height="1" fill="#fff"/><rect x="8" y="12" width="1" height="1" fill="#000"/><rect x="9" y="12" width="1" height="1" fill="#fff"/><rect x="10" y="12" width="1" height="1" fill="#000"/><rect x="11" y="12" width="1" height="1" fill="#fff"/><rect x="12" y="12" width="1" height="1" fill="#000"/><rect x="13" y="12" width="1" height="1" fill="#fff"/><rect x="14" y="12" width="2" height="1" fill="#000"/><rect x="1" y="13" width="1" height="1" fill="#000"/><rect x="2" y="13" width="13" height="1" fill="#fff"/><rect x="15" y="13" width="1" height="1" fill="#000"/><rect x="1" y="14" width="15" height="1" fill="#000"/></svg>
<svg style="left:21px;top:40px" width="5" height="9" viewBox="0 0 5 9"><rect x="0" y="0" width="1" height="1" fill="#008080"/><rect x="0" y="1" width="2" height="1" fill="#008080"/><rect x="0" y="2" width="3" height="1" fill="#008080"/><rect x="0" y="3" width="4" height="1" fill="#008080"/><rect x="0" y="4" width="5" height="1" fill="#008080"/><rect x="0" y="5" width="4" height="1" fill="#008080"/><rect x="0" y="6" width="3" height="1" fill="#008080"/><rect x="0" y="7" width="2" height="1" fill="#008080"/><rect x="0" y="8" width="1" height="1" fill="#008080"/></svg>
<div class="t" style="left:47px;top:34px;"><span style="letter-spacing:-0.15px">(6809-006) Сводная смета КС &nbsp;макет</span></div>
<div style="left:15px;top:56px;width:10px;height:1px;background:repeating-linear-gradient(to right,#A0A0A0 0 1px,transparent 1px 2px)"></div>
<svg style="left:10px;top:52px" width="9" height="9" viewBox="0 0 9 9"><rect x="0.5" y="0.5" width="8" height="8" fill="#fff" stroke="#A0A0A0"/><path d="M2 4.5h5" stroke="#000"/><path d="M4.5 2v5" stroke="#000"/></svg>
<svg style="left:24px;top:48px" width="16" height="15" viewBox="0 0 16 15"><rect x="12" y="0" width="3" height="1" fill="#000"/><rect x="2" y="1" width="1" height="1" fill="#000"/><rect x="12" y="1" width="1" height="1" fill="#000"/><rect x="13" y="1" width="2" height="1" fill="#FF0000"/><rect x="15" y="1" width="1" height="1" fill="#000"/><rect x="2" y="2" width="2" height="1" fill="#000"/><rect x="11" y="2" width="1" height="1" fill="#000"/><rect x="12" y="2" width="1" height="1" fill="#FFFF00"/><rect x="13" y="2" width="1" height="1" fill="#FF0000"/><rect x="14" y="2" width="1" height="1" fill="#000"/><rect x="2" y="3" width="1" height="1" fill="#000"/><rect x="3" y="3" width="1" height="1" fill="#00FFFF"/><rect x="4" y="3" width="1" height="1" fill="#000"/><rect x="11" y="3" width="1" height="1" fill="#000"/><rect x="12" y="3" width="1" height="1" fill="#FFFF00"/><rect x="13" y="3" width="1" height="1" fill="#fff"/><rect x="14" y="3" width="1" height="1" fill="#000"/><rect x="2" y="4" width="1" height="1" fill="#000"/><rect x="3" y="4" width="2" height="1" fill="#00FFFF"/><rect x="5" y="4" width="1" height="1" fill="#000"/><rect x="10" y="4" width="1" height="1" fill="#000"/><rect x="11" y="4" width="1" height="1" fill="#FFFF00"/><rect x="12" y="4" width="1" height="1" fill="#fff"/><rect x="13" y="4" width="1" height="1" fill="#000"/><rect x="2" y="5" width="1" height="1" fill="#000"/><rect x="3" y="5" width="3" height="1" fill="#00FFFF"/><rect x="6" y="5" width="1" height="1" fill="#000"/><rect x="10" y="5" width="1" height="1" fill="#000"/><rect x="11" y="5" width="2" height="1" fill="#FFFF00"/><rect x="13" y="5" width="1" height="1" fill="#000"/><rect x="2" y="6" width="1" height="1" fill="#000"/><rect x="3" y="6" width="1" height="1" fill="#00FFFF"/><rect x="4" y="6" width="1" height="1" fill="#000"/><rect x="5" y="6" width="2" height="1" fill="#00FFFF"/><rect x="7" y="6" width="1" height="1" fill="#000"/><rect x="9" y="6" width="1" height="1" fill="#000"/><rect x="10" y="6" width="2" height="1" fill="#FFFF00"/><rect x="12" y="6" width="1" height="1" fill="#000"/><rect x="2" y="7" width="1" height="1" fill="#000"/><rect x="3" y="7" width="1" height="1" fill="#00FFFF"/><rect x="4" y="7" width="2" height="1" fill="#000"/><rect x="6" y="7" width="2" height="1" fill="#00FFFF"/><rect x="8" y="7" width="4" height="1" fill="#000"/><rect x="2" y="8" width="1" height="1" fill="#000"/><rect x="3" y="8" width="1" height="1" fill="#00FFFF"/><rect x="4" y="8" width="1" height="1" fill="#000"/><rect x="5" y="8" width="1" height="1" fill="#fff"/><rect x="6" y="8" width="2" height="1" fill="#000"/><rect x="8" y="8" width="1" height="1" fill="#00FFFF"/><rect x="9" y="8" width="2" height="1" fill="#000"/><rect x="2" y="9" width="1" height="1" fill="#000"/><rect x="3" y="9" width="1" height="1" fill="#00FFFF"/><rect x="4" y="9" width="5" height="1" fill="#000"/><rect x="9" y="9" width="1" height="1" fill="#00FFFF"/><rect x="10" y="9" width="1" height="1" fill="#000"/><rect x="2" y="10" width="1" height="1" fill="#000"/><rect x="3" y="10" width="8" height="1" fill="#00FFFF"/><rect x="11" y="10" width="1" height="1" fill="#000"/><rect x="1" y="11" width="15" height="1" fill="#000"/><rect x="1" y="12" width="2" height="1" fill="#000"/><rect x="3" y="12" width="1" height="1" fill="#fff"/><rect x="4" y="12" width="1" height="1" fill="#000"/><rect x="5" y="12" width="1" height="1" fill="#fff"/><rect x="6" y="12" width="1" height="1" fill="#000"/><rect x="7" y="12" width="1" height="1" fill="#fff"/><rect x="8" y="12" width="1" height="1" fill="#000"/><rect x="9" y="12" width="1" height="1" fill="#fff"/><rect x="10" y="12" width="1" height="1" fill="#000"/><rect x="11" y="12" width="1" height="1" fill="#fff"/><rect x="12" y="12" width="1" height="1" fill="#000"/><rect x="13" y="12" width="1" height="1" fill="#fff"/><rect x="14" y="12" width="2" height="1" fill="#000"/><rect x="1" y="13" width="1" height="1" fill="#000"/><rect x="2" y="13" width="13" height="1" fill="#fff"/><rect x="15" y="13" width="1" height="1" fill="#000"/><rect x="1" y="14" width="15" height="1" fill="#000"/></svg>
<svg style="left:21px;top:56px" width="5" height="9" viewBox="0 0 5 9"><rect x="0" y="0" width="1" height="1" fill="#008080"/><rect x="0" y="1" width="2" height="1" fill="#008080"/><rect x="0" y="2" width="3" height="1" fill="#008080"/><rect x="0" y="3" width="4" height="1" fill="#008080"/><rect x="0" y="4" width="5" height="1" fill="#008080"/><rect x="0" y="5" width="4" height="1" fill="#008080"/><rect x="0" y="6" width="3" height="1" fill="#008080"/><rect x="0" y="7" width="2" height="1" fill="#008080"/><rect x="0" y="8" width="1" height="1" fill="#008080"/></svg>
<div class="t" style="left:47px;top:50px;">(ПС 1) ПРОЕКТИРОВАНИЕ ЖИЛОГО</div>
<div style="left:15px;top:72px;width:10px;height:1px;background:repeating-linear-gradient(to right,#A0A0A0 0 1px,transparent 1px 2px)"></div>
<svg style="left:10px;top:68px" width="9" height="9" viewBox="0 0 9 9"><rect x="0.5" y="0.5" width="8" height="8" fill="#fff" stroke="#A0A0A0"/><path d="M2 4.5h5" stroke="#000"/></svg>
<svg style="left:24px;top:64px" width="16" height="15" viewBox="0 0 16 15"><rect x="12" y="0" width="3" height="1" fill="#000"/><rect x="2" y="1" width="1" height="1" fill="#000"/><rect x="12" y="1" width="1" height="1" fill="#000"/><rect x="13" y="1" width="2" height="1" fill="#FF0000"/><rect x="15" y="1" width="1" height="1" fill="#000"/><rect x="2" y="2" width="2" height="1" fill="#000"/><rect x="11" y="2" width="1" height="1" fill="#000"/><rect x="12" y="2" width="1" height="1" fill="#FFFF00"/><rect x="13" y="2" width="1" height="1" fill="#FF0000"/><rect x="14" y="2" width="1" height="1" fill="#000"/><rect x="2" y="3" width="1" height="1" fill="#000"/><rect x="3" y="3" width="1" height="1" fill="#00FFFF"/><rect x="4" y="3" width="1" height="1" fill="#000"/><rect x="11" y="3" width="1" height="1" fill="#000"/><rect x="12" y="3" width="1" height="1" fill="#FFFF00"/><rect x="13" y="3" width="1" height="1" fill="#fff"/><rect x="14" y="3" width="1" height="1" fill="#000"/><rect x="2" y="4" width="1" height="1" fill="#000"/><rect x="3" y="4" width="2" height="1" fill="#00FFFF"/><rect x="5" y="4" width="1" height="1" fill="#000"/><rect x="10" y="4" width="1" height="1" fill="#000"/><rect x="11" y="4" width="1" height="1" fill="#FFFF00"/><rect x="12" y="4" width="1" height="1" fill="#fff"/><rect x="13" y="4" width="1" height="1" fill="#000"/><rect x="2" y="5" width="1" height="1" fill="#000"/><rect x="3" y="5" width="3" height="1" fill="#00FFFF"/><rect x="6" y="5" width="1" height="1" fill="#000"/><rect x="10" y="5" width="1" height="1" fill="#000"/><rect x="11" y="5" width="2" height="1" fill="#FFFF00"/><rect x="13" y="5" width="1" height="1" fill="#000"/><rect x="2" y="6" width="1" height="1" fill="#000"/><rect x="3" y="6" width="1" height="1" fill="#00FFFF"/><rect x="4" y="6" width="1" height="1" fill="#000"/><rect x="5" y="6" width="2" height="1" fill="#00FFFF"/><rect x="7" y="6" width="1" height="1" fill="#000"/><rect x="9" y="6" width="1" height="1" fill="#000"/><rect x="10" y="6" width="2" height="1" fill="#FFFF00"/><rect x="12" y="6" width="1" height="1" fill="#000"/><rect x="2" y="7" width="1" height="1" fill="#000"/><rect x="3" y="7" width="1" height="1" fill="#00FFFF"/><rect x="4" y="7" width="2" height="1" fill="#000"/><rect x="6" y="7" width="2" height="1" fill="#00FFFF"/><rect x="8" y="7" width="4" height="1" fill="#000"/><rect x="2" y="8" width="1" height="1" fill="#000"/><rect x="3" y="8" width="1" height="1" fill="#00FFFF"/><rect x="4" y="8" width="1" height="1" fill="#000"/><rect x="5" y="8" width="1" height="1" fill="#fff"/><rect x="6" y="8" width="2" height="1" fill="#000"/><rect x="8" y="8" width="1" height="1" fill="#00FFFF"/><rect x="9" y="8" width="2" height="1" fill="#000"/><rect x="2" y="9" width="1" height="1" fill="#000"/><rect x="3" y="9" width="1" height="1" fill="#00FFFF"/><rect x="4" y="9" width="5" height="1" fill="#000"/><rect x="9" y="9" width="1" height="1" fill="#00FFFF"/><rect x="10" y="9" width="1" height="1" fill="#000"/><rect x="2" y="10" width="1" height="1" fill="#000"/><rect x="3" y="10" width="8" height="1" fill="#00FFFF"/><rect x="11" y="10" width="1" height="1" fill="#000"/><rect x="1" y="11" width="15" height="1" fill="#000"/><rect x="1" y="12" width="2" height="1" fill="#000"/><rect x="3" y="12" width="1" height="1" fill="#fff"/><rect x="4" y="12" width="1" height="1" fill="#000"/><rect x="5" y="12" width="1" height="1" fill="#fff"/><rect x="6" y="12" width="1" height="1" fill="#000"/><rect x="7" y="12" width="1" height="1" fill="#fff"/><rect x="8" y="12" width="1" height="1" fill="#000"/><rect x="9" y="12" width="1" height="1" fill="#fff"/><rect x="10" y="12" width="1" height="1" fill="#000"/><rect x="11" y="12" width="1" height="1" fill="#fff"/><rect x="12" y="12" width="1" height="1" fill="#000"/><rect x="13" y="12" width="1" height="1" fill="#fff"/><rect x="14" y="12" width="2" height="1" fill="#000"/><rect x="1" y="13" width="1" height="1" fill="#000"/><rect x="2" y="13" width="13" height="1" fill="#fff"/><rect x="15" y="13" width="1" height="1" fill="#000"/><rect x="1" y="14" width="15" height="1" fill="#000"/></svg>
<div class="t" style="left:47px;top:66px;">(ПС 1/16/11) Газотвод №16</div>
<div style="left:34px;top:88px;width:12px;height:1px;background:repeating-linear-gradient(to right,#A0A0A0 0 1px,transparent 1px 2px)"></div>
<svg style="left:46px;top:82px" width="12" height="11" viewBox="0 0 12 11"><rect x="0" y="0" width="12" height="1" fill="#000"/><rect x="0" y="1" width="1" height="1" fill="#000"/><rect x="1" y="1" width="10" height="1" fill="#fff"/><rect x="11" y="1" width="1" height="1" fill="#000"/><rect x="0" y="2" width="1" height="1" fill="#000"/><rect x="1" y="2" width="1" height="1" fill="#fff"/><rect x="2" y="2" width="2" height="1" fill="#000"/><rect x="4" y="2" width="1" height="1" fill="#fff"/><rect x="5" y="2" width="5" height="1" fill="#000"/><rect x="10" y="2" width="1" height="1" fill="#fff"/><rect x="11" y="2" width="1" height="1" fill="#000"/><rect x="0" y="3" width="1" height="1" fill="#000"/><rect x="1" y="3" width="10" height="1" fill="#fff"/><rect x="11" y="3" width="1" height="1" fill="#000"/><rect x="0" y="4" width="1" height="1" fill="#000"/><rect x="1" y="4" width="1" height="1" fill="#fff"/><rect x="2" y="4" width="2" height="1" fill="#000"/><rect x="4" y="4" width="1" height="1" fill="#fff"/><rect x="5" y="4" width="2" height="1" fill="#000"/><rect x="7" y="4" width="1" height="1" fill="#fff"/><rect x="8" y="4" width="2" height="1" fill="#000"/><rect x="10" y="4" width="1" height="1" fill="#fff"/><rect x="11" y="4" width="1" height="1" fill="#000"/><rect x="0" y="5" width="1" height="1" fill="#000"/><rect x="1" y="5" width="10" height="1" fill="#fff"/><rect x="11" y="5" width="1" height="1" fill="#000"/><rect x="0" y="6" width="1" height="1" fill="#000"/><rect x="1" y="6" width="1" height="1" fill="#fff"/><rect x="2" y="6" width="2" height="1" fill="#000"/><rect x="4" y="6" width="1" height="1" fill="#fff"/><rect x="5" y="6" width="1" height="1" fill="#000"/><rect x="6" y="6" width="1" height="1" fill="#fff"/><rect x="7" y="6" width="3" height="1" fill="#000"/><rect x="10" y="6" width="1" height="1" fill="#fff"/><rect x="11" y="6" width="1" height="1" fill="#000"/><rect x="0" y="7" width="1" height="1" fill="#000"/><rect x="1" y="7" width="10" height="1" fill="#fff"/><rect x="11" y="7" width="1" height="1" fill="#000"/><rect x="0" y="8" width="1" height="1" fill="#000"/><rect x="1" y="8" width="1" height="1" fill="#fff"/><rect x="2" y="8" width="2" height="1" fill="#000"/><rect x="4" y="8" width="1" height="1" fill="#fff"/><rect x="5" y="8" width="2" height="1" fill="#000"/><rect x="7" y="8" width="2" height="1" fill="#fff"/><rect x="9" y="8" width="1" height="1" fill="#000"/><rect x="10" y="8" width="1" height="1" fill="#fff"/><rect x="11" y="8" width="1" height="1" fill="#000"/><rect x="0" y="9" width="1" height="1" fill="#000"/><rect x="1" y="9" width="10" height="1" fill="#fff"/><rect x="11" y="9" width="1" height="1" fill="#000"/><rect x="0" y="10" width="12" height="1" fill="#000"/></svg>
<svg style="left:40px;top:88px" width="5" height="9" viewBox="0 0 5 9"><rect x="0" y="0" width="1" height="1" fill="#008080"/><rect x="0" y="1" width="2" height="1" fill="#008080"/><rect x="0" y="2" width="3" height="1" fill="#008080"/><rect x="0" y="3" width="4" height="1" fill="#008080"/><rect x="0" y="4" width="5" height="1" fill="#008080"/><rect x="0" y="5" width="4" height="1" fill="#008080"/><rect x="0" y="6" width="3" height="1" fill="#008080"/><rect x="0" y="7" width="2" height="1" fill="#008080"/><rect x="0" y="8" width="1" height="1" fill="#008080"/></svg>
<div class="t" style="left:65px;top:82px;">(12-2/11) Теплоснабжение 1</div>
<div style="left:34px;top:104px;width:12px;height:1px;background:repeating-linear-gradient(to right,#A0A0A0 0 1px,transparent 1px 2px)"></div>
<svg style="left:46px;top:98px" width="12" height="11" viewBox="0 0 12 11"><rect x="0" y="0" width="12" height="1" fill="#000"/><rect x="0" y="1" width="1" height="1" fill="#000"/><rect x="1" y="1" width="10" height="1" fill="#fff"/><rect x="11" y="1" width="1" height="1" fill="#000"/><rect x="0" y="2" width="1" height="1" fill="#000"/><rect x="1" y="2" width="1" height="1" fill="#fff"/><rect x="2" y="2" width="2" height="1" fill="#000"/><rect x="4" y="2" width="1" height="1" fill="#fff"/><rect x="5" y="2" width="5" height="1" fill="#000"/><rect x="10" y="2" width="1" height="1" fill="#fff"/><rect x="11" y="2" width="1" height="1" fill="#000"/><rect x="0" y="3" width="1" height="1" fill="#000"/><rect x="1" y="3" width="10" height="1" fill="#fff"/><rect x="11" y="3" width="1" height="1" fill="#000"/><rect x="0" y="4" width="1" height="1" fill="#000"/><rect x="1" y="4" width="10" height="1" fill="#fff"/><rect x="11" y="4" width="1" height="1" fill="#000"/><rect x="0" y="5" width="1" height="1" fill="#000"/><rect x="1" y="5" width="10" height="1" fill="#fff"/><rect x="11" y="5" width="1" height="1" fill="#000"/><rect x="0" y="6" width="1" height="1" fill="#000"/><rect x="1" y="6" width="10" height="1" fill="#fff"/><rect x="11" y="6" width="1" height="1" fill="#000"/><rect x="0" y="7" width="1" height="1" fill="#000"/><rect x="1" y="7" width="10" height="1" fill="#fff"/><rect x="11" y="7" width="1" height="1" fill="#000"/><rect x="0" y="8" width="1" height="1" fill="#000"/><rect x="1" y="8" width="10" height="1" fill="#fff"/><rect x="11" y="8" width="1" height="1" fill="#000"/><rect x="0" y="9" width="1" height="1" fill="#000"/><rect x="1" y="9" width="10" height="1" fill="#fff"/><rect x="11" y="9" width="1" height="1" fill="#000"/><rect x="0" y="10" width="12" height="1" fill="#000"/></svg>
<div class="t" style="left:65px;top:98px;">(С3/12/1) Смета-затрата 1</div>
<div style="left:34px;top:120px;width:12px;height:1px;background:repeating-linear-gradient(to right,#A0A0A0 0 1px,transparent 1px 2px)"></div>
<svg style="left:46px;top:114px" width="12" height="11" viewBox="0 0 12 11"><rect x="0" y="0" width="12" height="1" fill="#000"/><rect x="0" y="1" width="1" height="1" fill="#000"/><rect x="1" y="1" width="10" height="1" fill="#fff"/><rect x="11" y="1" width="1" height="1" fill="#000"/><rect x="0" y="2" width="1" height="1" fill="#000"/><rect x="1" y="2" width="1" height="1" fill="#fff"/><rect x="2" y="2" width="2" height="1" fill="#000"/><rect x="4" y="2" width="1" height="1" fill="#fff"/><rect x="5" y="2" width="5" height="1" fill="#000"/><rect x="10" y="2" width="1" height="1" fill="#fff"/><rect x="11" y="2" width="1" height="1" fill="#000"/><rect x="0" y="3" width="1" height="1" fill="#000"/><rect x="1" y="3" width="10" height="1" fill="#fff"/><rect x="11" y="3" width="1" height="1" fill="#000"/><rect x="0" y="4" width="1" height="1" fill="#000"/><rect x="1" y="4" width="1" height="1" fill="#fff"/><rect x="2" y="4" width="2" height="1" fill="#000"/><rect x="4" y="4" width="1" height="1" fill="#fff"/><rect x="5" y="4" width="2" height="1" fill="#000"/><rect x="7" y="4" width="1" height="1" fill="#fff"/><rect x="8" y="4" width="2" height="1" fill="#000"/><rect x="10" y="4" width="1" height="1" fill="#fff"/><rect x="11" y="4" width="1" height="1" fill="#000"/><rect x="0" y="5" width="1" height="1" fill="#000"/><rect x="1" y="5" width="10" height="1" fill="#fff"/><rect x="11" y="5" width="1" height="1" fill="#000"/><rect x="0" y="6" width="1" height="1" fill="#000"/><rect x="1" y="6" width="1" height="1" fill="#fff"/><rect x="2" y="6" width="2" height="1" fill="#000"/><rect x="4" y="6" width="1" height="1" fill="#fff"/><rect x="5" y="6" width="1" height="1" fill="#000"/><rect x="6" y="6" width="1" height="1" fill="#fff"/><rect x="7" y="6" width="3" height="1" fill="#000"/><rect x="10" y="6" width="1" height="1" fill="#fff"/><rect x="11" y="6" width="1" height="1" fill="#000"/><rect x="0" y="7" width="1" height="1" fill="#000"/><rect x="1" y="7" width="10" height="1" fill="#fff"/><rect x="11" y="7" width="1" height="1" fill="#000"/><rect x="0" y="8" width="1" height="1" fill="#000"/><rect x="1" y="8" width="1" height="1" fill="#fff"/><rect x="2" y="8" width="2" height="1" fill="#000"/><rect x="4" y="8" width="1" height="1" fill="#fff"/><rect x="5" y="8" width="2" height="1" fill="#000"/><rect x="7" y="8" width="2" height="1" fill="#fff"/><rect x="9" y="8" width="1" height="1" fill="#000"/><rect x="10" y="8" width="1" height="1" fill="#fff"/><rect x="11" y="8" width="1" height="1" fill="#000"/><rect x="0" y="9" width="1" height="1" fill="#000"/><rect x="1" y="9" width="10" height="1" fill="#fff"/><rect x="11" y="9" width="1" height="1" fill="#000"/><rect x="0" y="10" width="12" height="1" fill="#000"/></svg>
<div class="t" style="left:65px;top:114px;">(04-2/11) Теплогазоснабжение</div>
<div style="left:34px;top:136px;width:12px;height:1px;background:repeating-linear-gradient(to right,#A0A0A0 0 1px,transparent 1px 2px)"></div>
<svg style="left:46px;top:130px" width="12" height="11" viewBox="0 0 12 11"><rect x="0" y="0" width="12" height="1" fill="#000"/><rect x="0" y="1" width="1" height="1" fill="#000"/><rect x="1" y="1" width="10" height="1" fill="#fff"/><rect x="11" y="1" width="1" height="1" fill="#000"/><rect x="0" y="2" width="1" height="1" fill="#000"/><rect x="1" y="2" width="1" height="1" fill="#fff"/><rect x="2" y="2" width="2" height="1" fill="#000"/><rect x="4" y="2" width="1" height="1" fill="#fff"/><rect x="5" y="2" width="5" height="1" fill="#000"/><rect x="10" y="2" width="1" height="1" fill="#fff"/><rect x="11" y="2" width="1" height="1" fill="#000"/><rect x="0" y="3" width="1" height="1" fill="#000"/><rect x="1" y="3" width="10" height="1" fill="#fff"/><rect x="11" y="3" width="1" height="1" fill="#000"/><rect x="0" y="4" width="1" height="1" fill="#000"/><rect x="1" y="4" width="1" height="1" fill="#fff"/><rect x="2" y="4" width="2" height="1" fill="#000"/><rect x="4" y="4" width="1" height="1" fill="#fff"/><rect x="5" y="4" width="2" height="1" fill="#000"/><rect x="7" y="4" width="1" height="1" fill="#fff"/><rect x="8" y="4" width="2" height="1" fill="#000"/><rect x="10" y="4" width="1" height="1" fill="#fff"/><rect x="11" y="4" width="1" height="1" fill="#000"/><rect x="0" y="5" width="1" height="1" fill="#000"/><rect x="1" y="5" width="10" height="1" fill="#fff"/><rect x="11" y="5" width="1" height="1" fill="#000"/><rect x="0" y="6" width="1" height="1" fill="#000"/><rect x="1" y="6" width="1" height="1" fill="#fff"/><rect x="2" y="6" width="2" height="1" fill="#000"/><rect x="4" y="6" width="1" height="1" fill="#fff"/><rect x="5" y="6" width="1" height="1" fill="#000"/><rect x="6" y="6" width="1" height="1" fill="#fff"/><rect x="7" y="6" width="3" height="1" fill="#000"/><rect x="10" y="6" width="1" height="1" fill="#fff"/><rect x="11" y="6" width="1" height="1" fill="#000"/><rect x="0" y="7" width="1" height="1" fill="#000"/><rect x="1" y="7" width="10" height="1" fill="#fff"/><rect x="11" y="7" width="1" height="1" fill="#000"/><rect x="0" y="8" width="1" height="1" fill="#000"/><rect x="1" y="8" width="1" height="1" fill="#fff"/><rect x="2" y="8" width="2" height="1" fill="#000"/><rect x="4" y="8" width="1" height="1" fill="#fff"/><rect x="5" y="8" width="2" height="1" fill="#000"/><rect x="7" y="8" width="2" height="1" fill="#fff"/><rect x="9" y="8" width="1" height="1" fill="#000"/><rect x="10" y="8" width="1" height="1" fill="#fff"/><rect x="11" y="8" width="1" height="1" fill="#000"/><rect x="0" y="9" width="1" height="1" fill="#000"/><rect x="1" y="9" width="10" height="1" fill="#fff"/><rect x="11" y="9" width="1" height="1" fill="#000"/><rect x="0" y="10" width="12" height="1" fill="#000"/></svg>
<div class="t" style="left:65px;top:130px;">(05-2/11) Газоснабжение</div>
<div style="left:34px;top:152px;width:12px;height:1px;background:repeating-linear-gradient(to right,#A0A0A0 0 1px,transparent 1px 2px)"></div>
<svg style="left:46px;top:146px" width="12" height="11" viewBox="0 0 12 11"><rect x="0" y="0" width="12" height="1" fill="#000"/><rect x="0" y="1" width="1" height="1" fill="#000"/><rect x="1" y="1" width="10" height="1" fill="#fff"/><rect x="11" y="1" width="1" height="1" fill="#000"/><rect x="0" y="2" width="1" height="1" fill="#000"/><rect x="1" y="2" width="1" height="1" fill="#fff"/><rect x="2" y="2" width="2" height="1" fill="#000"/><rect x="4" y="2" width="1" height="1" fill="#fff"/><rect x="5" y="2" width="5" height="1" fill="#000"/><rect x="10" y="2" width="1" height="1" fill="#fff"/><rect x="11" y="2" width="1" height="1" fill="#000"/><rect x="0" y="3" width="1" height="1" fill="#000"/><rect x="1" y="3" width="10" height="1" fill="#fff"/><rect x="11" y="3" width="1" height="1" fill="#000"/><rect x="0" y="4" width="1" height="1" fill="#000"/><rect x="1" y="4" width="1" height="1" fill="#fff"/><rect x="2" y="4" width="2" height="1" fill="#000"/><rect x="4" y="4" width="1" height="1" fill="#fff"/><rect x="5" y="4" width="2" height="1" fill="#000"/><rect x="7" y="4" width="1" height="1" fill="#fff"/><rect x="8" y="4" width="2" height="1" fill="#000"/><rect x="10" y="4" width="1" height="1" fill="#fff"/><rect x="11" y="4" width="1" height="1" fill="#000"/><rect x="0" y="5" width="1" height="1" fill="#000"/><rect x="1" y="5" width="10" height="1" fill="#fff"/><rect x="11" y="5" width="1" height="1" fill="#000"/><rect x="0" y="6" width="1" height="1" fill="#000"/><rect x="1" y="6" width="1" height="1" fill="#fff"/><rect x="2" y="6" width="2" height="1" fill="#000"/><rect x="4" y="6" width="1" height="1" fill="#fff"/><rect x="5" y="6" width="1" height="1" fill="#000"/><rect x="6" y="6" width="1" height="1" fill="#fff"/><rect x="7" y="6" width="3" height="1" fill="#000"/><rect x="10" y="6" width="1" height="1" fill="#fff"/><rect x="11" y="6" width="1" height="1" fill="#000"/><rect x="0" y="7" width="1" height="1" fill="#000"/><rect x="1" y="7" width="10" height="1" fill="#fff"/><rect x="11" y="7" width="1" height="1" fill="#000"/><rect x="0" y="8" width="1" height="1" fill="#000"/><rect x="1" y="8" width="1" height="1" fill="#fff"/><rect x="2" y="8" width="2" height="1" fill="#000"/><rect x="4" y="8" width="1" height="1" fill="#fff"/><rect x="5" y="8" width="2" height="1" fill="#000"/><rect x="7" y="8" width="2" height="1" fill="#fff"/><rect x="9" y="8" width="1" height="1" fill="#000"/><rect x="10" y="8" width="1" height="1" fill="#fff"/><rect x="11" y="8" width="1" height="1" fill="#000"/><rect x="0" y="9" width="1" height="1" fill="#000"/><rect x="1" y="9" width="10" height="1" fill="#fff"/><rect x="11" y="9" width="1" height="1" fill="#000"/><rect x="0" y="10" width="12" height="1" fill="#000"/></svg>
<div class="t" style="left:65px;top:146px;">(03-2/11) Газоотвод</div>
<div style="left:34px;top:168px;width:12px;height:1px;background:repeating-linear-gradient(to right,#A0A0A0 0 1px,transparent 1px 2px)"></div>
<svg style="left:46px;top:162px" width="12" height="11" viewBox="0 0 12 11"><rect x="0" y="0" width="12" height="1" fill="#000"/><rect x="0" y="1" width="1" height="1" fill="#000"/><rect x="1" y="1" width="10" height="1" fill="#fff"/><rect x="11" y="1" width="1" height="1" fill="#000"/><rect x="0" y="2" width="1" height="1" fill="#000"/><rect x="1" y="2" width="1" height="1" fill="#fff"/><rect x="2" y="2" width="3" height="1" fill="#000"/><rect x="5" y="2" width="4" height="1" fill="#fff"/><rect x="9" y="2" width="1" height="1" fill="#000"/><rect x="10" y="2" width="1" height="1" fill="#fff"/><rect x="11" y="2" width="1" height="1" fill="#000"/><rect x="0" y="3" width="1" height="1" fill="#000"/><rect x="1" y="3" width="1" height="1" fill="#fff"/><rect x="2" y="3" width="1" height="1" fill="#000"/><rect x="3" y="3" width="1" height="1" fill="#fff"/><rect x="4" y="3" width="1" height="1" fill="#000"/><rect x="5" y="3" width="3" height="1" fill="#fff"/><rect x="8" y="3" width="1" height="1" fill="#000"/><rect x="9" y="3" width="2" height="1" fill="#fff"/><rect x="11" y="3" width="1" height="1" fill="#000"/><rect x="0" y="4" width="1" height="1" fill="#000"/><rect x="1" y="4" width="1" height="1" fill="#fff"/><rect x="2" y="4" width="3" height="1" fill="#000"/><rect x="5" y="4" width="2" height="1" fill="#fff"/><rect x="7" y="4" width="1" height="1" fill="#000"/><rect x="8" y="4" width="3" height="1" fill="#fff"/><rect x="11" y="4" width="1" height="1" fill="#000"/><rect x="0" y="5" width="1" height="1" fill="#000"/><rect x="1" y="5" width="5" height="1" fill="#fff"/><rect x="6" y="5" width="1" height="1" fill="#000"/><rect x="7" y="5" width="4" height="1" fill="#fff"/><rect x="11" y="5" width="1" height="1" fill="#000"/><rect x="0" y="6" width="1" height="1" fill="#000"/><rect x="1" y="6" width="4" height="1" fill="#fff"/><rect x="5" y="6" width="1" height="1" fill="#000"/><rect x="6" y="6" width="1" height="1" fill="#fff"/><rect x="7" y="6" width="3" height="1" fill="#000"/><rect x="10" y="6" width="1" height="1" fill="#fff"/><rect x="11" y="6" width="1" height="1" fill="#000"/><rect x="0" y="7" width="1" height="1" fill="#000"/><rect x="1" y="7" width="3" height="1" fill="#fff"/><rect x="4" y="7" width="1" height="1" fill="#000"/><rect x="5" y="7" width="2" height="1" fill="#fff"/><rect x="7" y="7" width="1" height="1" fill="#000"/><rect x="8" y="7" width="1" height="1" fill="#fff"/><rect x="9" y="7" width="1" height="1" fill="#000"/><rect x="10" y="7" width="1" height="1" fill="#fff"/><rect x="11" y="7" width="1" height="1" fill="#000"/><rect x="0" y="8" width="1" height="1" fill="#000"/><rect x="1" y="8" width="2" height="1" fill="#fff"/><rect x="3" y="8" width="1" height="1" fill="#000"/><rect x="4" y="8" width="3" height="1" fill="#fff"/><rect x="7" y="8" width="3" height="1" fill="#000"/><rect x="10" y="8" width="1" height="1" fill="#fff"/><rect x="11" y="8" width="1" height="1" fill="#000"/><rect x="0" y="9" width="1" height="1" fill="#000"/><rect x="1" y="9" width="10" height="1" fill="#fff"/><rect x="11" y="9" width="1" height="1" fill="#000"/><rect x="0" y="10" width="12" height="1" fill="#000"/></svg>
<div class="t" style="left:65px;top:162px;">(СПН 12/23) Смета-процентная</div>
<div style="left:34px;top:184px;width:12px;height:1px;background:repeating-linear-gradient(to right,#A0A0A0 0 1px,transparent 1px 2px)"></div>
<svg style="left:46px;top:178px" width="12" height="11" viewBox="0 0 12 11"><rect x="0" y="0" width="12" height="1" fill="#000"/><rect x="0" y="1" width="1" height="1" fill="#000"/><rect x="1" y="1" width="10" height="1" fill="#fff"/><rect x="11" y="1" width="1" height="1" fill="#000"/><rect x="0" y="2" width="1" height="1" fill="#000"/><rect x="1" y="2" width="1" height="1" fill="#fff"/><rect x="2" y="2" width="3" height="1" fill="#000"/><rect x="5" y="2" width="4" height="1" fill="#fff"/><rect x="9" y="2" width="1" height="1" fill="#000"/><rect x="10" y="2" width="1" height="1" fill="#fff"/><rect x="11" y="2" width="1" height="1" fill="#000"/><rect x="0" y="3" width="1" height="1" fill="#000"/><rect x="1" y="3" width="1" height="1" fill="#fff"/><rect x="2" y="3" width="1" height="1" fill="#000"/><rect x="3" y="3" width="1" height="1" fill="#fff"/><rect x="4" y="3" width="1" height="1" fill="#000"/><rect x="5" y="3" width="3" height="1" fill="#fff"/><rect x="8" y="3" width="1" height="1" fill="#000"/><rect x="9" y="3" width="2" height="1" fill="#fff"/><rect x="11" y="3" width="1" height="1" fill="#000"/><rect x="0" y="4" width="1" height="1" fill="#000"/><rect x="1" y="4" width="1" height="1" fill="#fff"/><rect x="2" y="4" width="3" height="1" fill="#000"/><rect x="5" y="4" width="2" height="1" fill="#fff"/><rect x="7" y="4" width="1" height="1" fill="#000"/><rect x="8" y="4" width="3" height="1" fill="#fff"/><rect x="11" y="4" width="1" height="1" fill="#000"/><rect x="0" y="5" width="1" height="1" fill="#000"/><rect x="1" y="5" width="5" height="1" fill="#fff"/><rect x="6" y="5" width="1" height="1" fill="#000"/><rect x="7" y="5" width="4" height="1" fill="#fff"/><rect x="11" y="5" width="1" height="1" fill="#000"/><rect x="0" y="6" width="1" height="1" fill="#000"/><rect x="1" y="6" width="4" height="1" fill="#fff"/><rect x="5" y="6" width="1" height="1" fill="#000"/><rect x="6" y="6" width="1" height="1" fill="#fff"/><rect x="7" y="6" width="3" height="1" fill="#000"/><rect x="10" y="6" width="1" height="1" fill="#fff"/><rect x="11" y="6" width="1" height="1" fill="#000"/><rect x="0" y="7" width="1" height="1" fill="#000"/><rect x="1" y="7" width="3" height="1" fill="#fff"/><rect x="4" y="7" width="1" height="1" fill="#000"/><rect x="5" y="7" width="2" height="1" fill="#fff"/><rect x="7" y="7" width="1" height="1" fill="#000"/><rect x="8" y="7" width="1" height="1" fill="#fff"/><rect x="9" y="7" width="1" height="1" fill="#000"/><rect x="10" y="7" width="1" height="1" fill="#fff"/><rect x="11" y="7" width="1" height="1" fill="#000"/><rect x="0" y="8" width="1" height="1" fill="#000"/><rect x="1" y="8" width="2" height="1" fill="#fff"/><rect x="3" y="8" width="1" height="1" fill="#000"/><rect x="4" y="8" width="3" height="1" fill="#fff"/><rect x="7" y="8" width="3" height="1" fill="#000"/><rect x="10" y="8" width="1" height="1" fill="#fff"/><rect x="11" y="8" width="1" height="1" fill="#000"/><rect x="0" y="9" width="1" height="1" fill="#000"/><rect x="1" y="9" width="10" height="1" fill="#fff"/><rect x="11" y="9" width="1" height="1" fill="#000"/><rect x="0" y="10" width="12" height="1" fill="#000"/></svg>
<div class="t" style="left:65px;top:178px;">(СПН) Смета процентная норма</div>
<div style="left:34px;top:200px;width:12px;height:1px;background:repeating-linear-gradient(to right,#A0A0A0 0 1px,transparent 1px 2px)"></div>
<svg style="left:46px;top:194px" width="12" height="11" viewBox="0 0 12 11"><rect x="0" y="0" width="12" height="1" fill="#000"/><rect x="0" y="1" width="1" height="1" fill="#000"/><rect x="1" y="1" width="10" height="1" fill="#fff"/><rect x="11" y="1" width="1" height="1" fill="#000"/><rect x="0" y="2" width="1" height="1" fill="#000"/><rect x="1" y="2" width="2" height="1" fill="#fff"/><rect x="3" y="2" width="4" height="1" fill="#000"/><rect x="7" y="2" width="4" height="1" fill="#fff"/><rect x="11" y="2" width="1" height="1" fill="#000"/><rect x="0" y="3" width="1" height="1" fill="#000"/><rect x="1" y="3" width="1" height="1" fill="#fff"/><rect x="2" y="3" width="1" height="1" fill="#000"/><rect x="3" y="3" width="4" height="1" fill="#fff"/><rect x="7" y="3" width="1" height="1" fill="#000"/><rect x="8" y="3" width="3" height="1" fill="#fff"/><rect x="11" y="3" width="1" height="1" fill="#000"/><rect x="0" y="4" width="1" height="1" fill="#000"/><rect x="1" y="4" width="7" height="1" fill="#fff"/><rect x="8" y="4" width="1" height="1" fill="#000"/><rect x="9" y="4" width="2" height="1" fill="#fff"/><rect x="11" y="4" width="1" height="1" fill="#000"/><rect x="0" y="5" width="1" height="1" fill="#000"/><rect x="1" y="5" width="3" height="1" fill="#fff"/><rect x="4" y="5" width="5" height="1" fill="#000"/><rect x="9" y="5" width="2" height="1" fill="#fff"/><rect x="11" y="5" width="1" height="1" fill="#000"/><rect x="0" y="6" width="1" height="1" fill="#000"/><rect x="1" y="6" width="7" height="1" fill="#fff"/><rect x="8" y="6" width="1" height="1" fill="#000"/><rect x="9" y="6" width="2" height="1" fill="#fff"/><rect x="11" y="6" width="1" height="1" fill="#000"/><rect x="0" y="7" width="1" height="1" fill="#000"/><rect x="1" y="7" width="1" height="1" fill="#fff"/><rect x="2" y="7" width="1" height="1" fill="#000"/><rect x="3" y="7" width="4" height="1" fill="#fff"/><rect x="7" y="7" width="1" height="1" fill="#000"/><rect x="8" y="7" width="3" height="1" fill="#fff"/><rect x="11" y="7" width="1" height="1" fill="#000"/><rect x="0" y="8" width="1" height="1" fill="#000"/><rect x="1" y="8" width="2" height="1" fill="#fff"/><rect x="3" y="8" width="4" height="1" fill="#000"/><rect x="7" y="8" width="4" height="1" fill="#fff"/><rect x="11" y="8" width="1" height="1" fill="#000"/><rect x="0" y="9" width="1" height="1" fill="#000"/><rect x="1" y="9" width="10" height="1" fill="#fff"/><rect x="11" y="9" width="1" height="1" fill="#000"/><rect x="0" y="10" width="12" height="1" fill="#000"/></svg>
<div style="left:63px;top:192px;width:160px;height:16px;background:#0B50F0;outline:1px dotted #F8C000;outline-offset:-1px"></div>
<div class="t" style="left:65px;top:194px;color:#fff">(СЭ7-12/1) Смета-экспертиза 7</div>
<div style="left:15px;top:216px;width:10px;height:1px;background:repeating-linear-gradient(to right,#A0A0A0 0 1px,transparent 1px 2px)"></div>
<svg style="left:10px;top:212px" width="9" height="9" viewBox="0 0 9 9"><rect x="0.5" y="0.5" width="8" height="8" fill="#fff" stroke="#A0A0A0"/><path d="M2 4.5h5" stroke="#000"/><path d="M4.5 2v5" stroke="#000"/></svg>
<svg style="left:24px;top:208px" width="16" height="15" viewBox="0 0 16 15"><rect x="12" y="0" width="3" height="1" fill="#000"/><rect x="2" y="1" width="1" height="1" fill="#000"/><rect x="12" y="1" width="1" height="1" fill="#000"/><rect x="13" y="1" width="2" height="1" fill="#FF0000"/><rect x="15" y="1" width="1" height="1" fill="#000"/><rect x="2" y="2" width="2" height="1" fill="#000"/><rect x="11" y="2" width="1" height="1" fill="#000"/><rect x="12" y="2" width="1" height="1" fill="#FFFF00"/><rect x="13" y="2" width="1" height="1" fill="#FF0000"/><rect x="14" y="2" width="1" height="1" fill="#000"/><rect x="2" y="3" width="1" height="1" fill="#000"/><rect x="3" y="3" width="1" height="1" fill="#00FFFF"/><rect x="4" y="3" width="1" height="1" fill="#000"/><rect x="11" y="3" width="1" height="1" fill="#000"/><rect x="12" y="3" width="1" height="1" fill="#FFFF00"/><rect x="13" y="3" width="1" height="1" fill="#fff"/><rect x="14" y="3" width="1" height="1" fill="#000"/><rect x="2" y="4" width="1" height="1" fill="#000"/><rect x="3" y="4" width="2" height="1" fill="#00FFFF"/><rect x="5" y="4" width="1" height="1" fill="#000"/><rect x="10" y="4" width="1" height="1" fill="#000"/><rect x="11" y="4" width="1" height="1" fill="#FFFF00"/><rect x="12" y="4" width="1" height="1" fill="#fff"/><rect x="13" y="4" width="1" height="1" fill="#000"/><rect x="2" y="5" width="1" height="1" fill="#000"/><rect x="3" y="5" width="3" height="1" fill="#00FFFF"/><rect x="6" y="5" width="1" height="1" fill="#000"/><rect x="10" y="5" width="1" height="1" fill="#000"/><rect x="11" y="5" width="2" height="1" fill="#FFFF00"/><rect x="13" y="5" width="1" height="1" fill="#000"/><rect x="2" y="6" width="1" height="1" fill="#000"/><rect x="3" y="6" width="1" height="1" fill="#00FFFF"/><rect x="4" y="6" width="1" height="1" fill="#000"/><rect x="5" y="6" width="2" height="1" fill="#00FFFF"/><rect x="7" y="6" width="1" height="1" fill="#000"/><rect x="9" y="6" width="1" height="1" fill="#000"/><rect x="10" y="6" width="2" height="1" fill="#FFFF00"/><rect x="12" y="6" width="1" height="1" fill="#000"/><rect x="2" y="7" width="1" height="1" fill="#000"/><rect x="3" y="7" width="1" height="1" fill="#00FFFF"/><rect x="4" y="7" width="2" height="1" fill="#000"/><rect x="6" y="7" width="2" height="1" fill="#00FFFF"/><rect x="8" y="7" width="4" height="1" fill="#000"/><rect x="2" y="8" width="1" height="1" fill="#000"/><rect x="3" y="8" width="1" height="1" fill="#00FFFF"/><rect x="4" y="8" width="1" height="1" fill="#000"/><rect x="5" y="8" width="1" height="1" fill="#fff"/><rect x="6" y="8" width="2" height="1" fill="#000"/><rect x="8" y="8" width="1" height="1" fill="#00FFFF"/><rect x="9" y="8" width="2" height="1" fill="#000"/><rect x="2" y="9" width="1" height="1" fill="#000"/><rect x="3" y="9" width="1" height="1" fill="#00FFFF"/><rect x="4" y="9" width="5" height="1" fill="#000"/><rect x="9" y="9" width="1" height="1" fill="#00FFFF"/><rect x="10" y="9" width="1" height="1" fill="#000"/><rect x="2" y="10" width="1" height="1" fill="#000"/><rect x="3" y="10" width="8" height="1" fill="#00FFFF"/><rect x="11" y="10" width="1" height="1" fill="#000"/><rect x="1" y="11" width="15" height="1" fill="#000"/><rect x="1" y="12" width="2" height="1" fill="#000"/><rect x="3" y="12" width="1" height="1" fill="#fff"/><rect x="4" y="12" width="1" height="1" fill="#000"/><rect x="5" y="12" width="1" height="1" fill="#fff"/><rect x="6" y="12" width="1" height="1" fill="#000"/><rect x="7" y="12" width="1" height="1" fill="#fff"/><rect x="8" y="12" width="1" height="1" fill="#000"/><rect x="9" y="12" width="1" height="1" fill="#fff"/><rect x="10" y="12" width="1" height="1" fill="#000"/><rect x="11" y="12" width="1" height="1" fill="#fff"/><rect x="12" y="12" width="1" height="1" fill="#000"/><rect x="13" y="12" width="1" height="1" fill="#fff"/><rect x="14" y="12" width="2" height="1" fill="#000"/><rect x="1" y="13" width="1" height="1" fill="#000"/><rect x="2" y="13" width="13" height="1" fill="#fff"/><rect x="15" y="13" width="1" height="1" fill="#000"/><rect x="1" y="14" width="15" height="1" fill="#000"/></svg>
<div class="t" style="left:47px;top:210px;">(ПС 3/5) Проектирование Газотвода</div>
<div style="left:15px;top:232px;width:10px;height:1px;background:repeating-linear-gradient(to right,#A0A0A0 0 1px,transparent 1px 2px)"></div>
<svg style="left:10px;top:228px" width="9" height="9" viewBox="0 0 9 9"><rect x="0.5" y="0.5" width="8" height="8" fill="#fff" stroke="#A0A0A0"/><path d="M2 4.5h5" stroke="#000"/><path d="M4.5 2v5" stroke="#000"/></svg>
<svg style="left:24px;top:224px" width="16" height="15" viewBox="0 0 16 15"><rect x="12" y="0" width="3" height="1" fill="#000"/><rect x="2" y="1" width="1" height="1" fill="#000"/><rect x="12" y="1" width="1" height="1" fill="#000"/><rect x="13" y="1" width="2" height="1" fill="#FF0000"/><rect x="15" y="1" width="1" height="1" fill="#000"/><rect x="2" y="2" width="2" height="1" fill="#000"/><rect x="11" y="2" width="1" height="1" fill="#000"/><rect x="12" y="2" width="1" height="1" fill="#FFFF00"/><rect x="13" y="2" width="1" height="1" fill="#FF0000"/><rect x="14" y="2" width="1" height="1" fill="#000"/><rect x="2" y="3" width="1" height="1" fill="#000"/><rect x="3" y="3" width="1" height="1" fill="#00FFFF"/><rect x="4" y="3" width="1" height="1" fill="#000"/><rect x="11" y="3" width="1" height="1" fill="#000"/><rect x="12" y="3" width="1" height="1" fill="#FFFF00"/><rect x="13" y="3" width="1" height="1" fill="#fff"/><rect x="14" y="3" width="1" height="1" fill="#000"/><rect x="2" y="4" width="1" height="1" fill="#000"/><rect x="3" y="4" width="2" height="1" fill="#00FFFF"/><rect x="5" y="4" width="1" height="1" fill="#000"/><rect x="10" y="4" width="1" height="1" fill="#000"/><rect x="11" y="4" width="1" height="1" fill="#FFFF00"/><rect x="12" y="4" width="1" height="1" fill="#fff"/><rect x="13" y="4" width="1" height="1" fill="#000"/><rect x="2" y="5" width="1" height="1" fill="#000"/><rect x="3" y="5" width="3" height="1" fill="#00FFFF"/><rect x="6" y="5" width="1" height="1" fill="#000"/><rect x="10" y="5" width="1" height="1" fill="#000"/><rect x="11" y="5" width="2" height="1" fill="#FFFF00"/><rect x="13" y="5" width="1" height="1" fill="#000"/><rect x="2" y="6" width="1" height="1" fill="#000"/><rect x="3" y="6" width="1" height="1" fill="#00FFFF"/><rect x="4" y="6" width="1" height="1" fill="#000"/><rect x="5" y="6" width="2" height="1" fill="#00FFFF"/><rect x="7" y="6" width="1" height="1" fill="#000"/><rect x="9" y="6" width="1" height="1" fill="#000"/><rect x="10" y="6" width="2" height="1" fill="#FFFF00"/><rect x="12" y="6" width="1" height="1" fill="#000"/><rect x="2" y="7" width="1" height="1" fill="#000"/><rect x="3" y="7" width="1" height="1" fill="#00FFFF"/><rect x="4" y="7" width="2" height="1" fill="#000"/><rect x="6" y="7" width="2" height="1" fill="#00FFFF"/><rect x="8" y="7" width="4" height="1" fill="#000"/><rect x="2" y="8" width="1" height="1" fill="#000"/><rect x="3" y="8" width="1" height="1" fill="#00FFFF"/><rect x="4" y="8" width="1" height="1" fill="#000"/><rect x="5" y="8" width="1" height="1" fill="#fff"/><rect x="6" y="8" width="2" height="1" fill="#000"/><rect x="8" y="8" width="1" height="1" fill="#00FFFF"/><rect x="9" y="8" width="2" height="1" fill="#000"/><rect x="2" y="9" width="1" height="1" fill="#000"/><rect x="3" y="9" width="1" height="1" fill="#00FFFF"/><rect x="4" y="9" width="5" height="1" fill="#000"/><rect x="9" y="9" width="1" height="1" fill="#00FFFF"/><rect x="10" y="9" width="1" height="1" fill="#000"/><rect x="2" y="10" width="1" height="1" fill="#000"/><rect x="3" y="10" width="8" height="1" fill="#00FFFF"/><rect x="11" y="10" width="1" height="1" fill="#000"/><rect x="1" y="11" width="15" height="1" fill="#000"/><rect x="1" y="12" width="2" height="1" fill="#000"/><rect x="3" y="12" width="1" height="1" fill="#fff"/><rect x="4" y="12" width="1" height="1" fill="#000"/><rect x="5" y="12" width="1" height="1" fill="#fff"/><rect x="6" y="12" width="1" height="1" fill="#000"/><rect x="7" y="12" width="1" height="1" fill="#fff"/><rect x="8" y="12" width="1" height="1" fill="#000"/><rect x="9" y="12" width="1" height="1" fill="#fff"/><rect x="10" y="12" width="1" height="1" fill="#000"/><rect x="11" y="12" width="1" height="1" fill="#fff"/><rect x="12" y="12" width="1" height="1" fill="#000"/><rect x="13" y="12" width="1" height="1" fill="#fff"/><rect x="14" y="12" width="2" height="1" fill="#000"/><rect x="1" y="13" width="1" height="1" fill="#000"/><rect x="2" y="13" width="13" height="1" fill="#fff"/><rect x="15" y="13" width="1" height="1" fill="#000"/><rect x="1" y="14" width="15" height="1" fill="#000"/></svg>
<div class="t" style="left:47px;top:226px;">(ПС 1/11) Проект 2011</div>
<div style="left:15px;top:248px;width:10px;height:1px;background:repeating-linear-gradient(to right,#A0A0A0 0 1px,transparent 1px 2px)"></div>
<svg style="left:10px;top:244px" width="9" height="9" viewBox="0 0 9 9"><rect x="0.5" y="0.5" width="8" height="8" fill="#fff" stroke="#A0A0A0"/><path d="M2 4.5h5" stroke="#000"/><path d="M4.5 2v5" stroke="#000"/></svg>
<svg style="left:24px;top:240px" width="16" height="15" viewBox="0 0 16 15"><rect x="12" y="0" width="3" height="1" fill="#000"/><rect x="2" y="1" width="1" height="1" fill="#000"/><rect x="12" y="1" width="1" height="1" fill="#000"/><rect x="13" y="1" width="2" height="1" fill="#FF0000"/><rect x="15" y="1" width="1" height="1" fill="#000"/><rect x="2" y="2" width="2" height="1" fill="#000"/><rect x="11" y="2" width="1" height="1" fill="#000"/><rect x="12" y="2" width="1" height="1" fill="#FFFF00"/><rect x="13" y="2" width="1" height="1" fill="#FF0000"/><rect x="14" y="2" width="1" height="1" fill="#000"/><rect x="2" y="3" width="1" height="1" fill="#000"/><rect x="3" y="3" width="1" height="1" fill="#00FFFF"/><rect x="4" y="3" width="1" height="1" fill="#000"/><rect x="11" y="3" width="1" height="1" fill="#000"/><rect x="12" y="3" width="1" height="1" fill="#FFFF00"/><rect x="13" y="3" width="1" height="1" fill="#fff"/><rect x="14" y="3" width="1" height="1" fill="#000"/><rect x="2" y="4" width="1" height="1" fill="#000"/><rect x="3" y="4" width="2" height="1" fill="#00FFFF"/><rect x="5" y="4" width="1" height="1" fill="#000"/><rect x="10" y="4" width="1" height="1" fill="#000"/><rect x="11" y="4" width="1" height="1" fill="#FFFF00"/><rect x="12" y="4" width="1" height="1" fill="#fff"/><rect x="13" y="4" width="1" height="1" fill="#000"/><rect x="2" y="5" width="1" height="1" fill="#000"/><rect x="3" y="5" width="3" height="1" fill="#00FFFF"/><rect x="6" y="5" width="1" height="1" fill="#000"/><rect x="10" y="5" width="1" height="1" fill="#000"/><rect x="11" y="5" width="2" height="1" fill="#FFFF00"/><rect x="13" y="5" width="1" height="1" fill="#000"/><rect x="2" y="6" width="1" height="1" fill="#000"/><rect x="3" y="6" width="1" height="1" fill="#00FFFF"/><rect x="4" y="6" width="1" height="1" fill="#000"/><rect x="5" y="6" width="2" height="1" fill="#00FFFF"/><rect x="7" y="6" width="1" height="1" fill="#000"/><rect x="9" y="6" width="1" height="1" fill="#000"/><rect x="10" y="6" width="2" height="1" fill="#FFFF00"/><rect x="12" y="6" width="1" height="1" fill="#000"/><rect x="2" y="7" width="1" height="1" fill="#000"/><rect x="3" y="7" width="1" height="1" fill="#00FFFF"/><rect x="4" y="7" width="2" height="1" fill="#000"/><rect x="6" y="7" width="2" height="1" fill="#00FFFF"/><rect x="8" y="7" width="4" height="1" fill="#000"/><rect x="2" y="8" width="1" height="1" fill="#000"/><rect x="3" y="8" width="1" height="1" fill="#00FFFF"/><rect x="4" y="8" width="1" height="1" fill="#000"/><rect x="5" y="8" width="1" height="1" fill="#fff"/><rect x="6" y="8" width="2" height="1" fill="#000"/><rect x="8" y="8" width="1" height="1" fill="#00FFFF"/><rect x="9" y="8" width="2" height="1" fill="#000"/><rect x="2" y="9" width="1" height="1" fill="#000"/><rect x="3" y="9" width="1" height="1" fill="#00FFFF"/><rect x="4" y="9" width="5" height="1" fill="#000"/><rect x="9" y="9" width="1" height="1" fill="#00FFFF"/><rect x="10" y="9" width="1" height="1" fill="#000"/><rect x="2" y="10" width="1" height="1" fill="#000"/><rect x="3" y="10" width="8" height="1" fill="#00FFFF"/><rect x="11" y="10" width="1" height="1" fill="#000"/><rect x="1" y="11" width="15" height="1" fill="#000"/><rect x="1" y="12" width="2" height="1" fill="#000"/><rect x="3" y="12" width="1" height="1" fill="#fff"/><rect x="4" y="12" width="1" height="1" fill="#000"/><rect x="5" y="12" width="1" height="1" fill="#fff"/><rect x="6" y="12" width="1" height="1" fill="#000"/><rect x="7" y="12" width="1" height="1" fill="#fff"/><rect x="8" y="12" width="1" height="1" fill="#000"/><rect x="9" y="12" width="1" height="1" fill="#fff"/><rect x="10" y="12" width="1" height="1" fill="#000"/><rect x="11" y="12" width="1" height="1" fill="#fff"/><rect x="12" y="12" width="1" height="1" fill="#000"/><rect x="13" y="12" width="1" height="1" fill="#fff"/><rect x="14" y="12" width="2" height="1" fill="#000"/><rect x="1" y="13" width="1" height="1" fill="#000"/><rect x="2" y="13" width="13" height="1" fill="#fff"/><rect x="15" y="13" width="1" height="1" fill="#000"/><rect x="1" y="14" width="15" height="1" fill="#000"/></svg>
<div class="t" style="left:47px;top:242px;">(ПС2/12/11) Проектирование эскиз</div>
<div style="left:15px;top:264px;width:10px;height:1px;background:repeating-linear-gradient(to right,#A0A0A0 0 1px,transparent 1px 2px)"></div>
<svg style="left:10px;top:260px" width="9" height="9" viewBox="0 0 9 9"><rect x="0.5" y="0.5" width="8" height="8" fill="#fff" stroke="#A0A0A0"/><path d="M2 4.5h5" stroke="#000"/><path d="M4.5 2v5" stroke="#000"/></svg>
<svg style="left:24px;top:256px" width="16" height="15" viewBox="0 0 16 15"><rect x="12" y="0" width="3" height="1" fill="#000"/><rect x="2" y="1" width="1" height="1" fill="#000"/><rect x="12" y="1" width="1" height="1" fill="#000"/><rect x="13" y="1" width="2" height="1" fill="#FF0000"/><rect x="15" y="1" width="1" height="1" fill="#000"/><rect x="2" y="2" width="2" height="1" fill="#000"/><rect x="11" y="2" width="1" height="1" fill="#000"/><rect x="12" y="2" width="1" height="1" fill="#FFFF00"/><rect x="13" y="2" width="1" height="1" fill="#FF0000"/><rect x="14" y="2" width="1" height="1" fill="#000"/><rect x="2" y="3" width="1" height="1" fill="#000"/><rect x="3" y="3" width="1" height="1" fill="#00FFFF"/><rect x="4" y="3" width="1" height="1" fill="#000"/><rect x="11" y="3" width="1" height="1" fill="#000"/><rect x="12" y="3" width="1" height="1" fill="#FFFF00"/><rect x="13" y="3" width="1" height="1" fill="#fff"/><rect x="14" y="3" width="1" height="1" fill="#000"/><rect x="2" y="4" width="1" height="1" fill="#000"/><rect x="3" y="4" width="2" height="1" fill="#00FFFF"/><rect x="5" y="4" width="1" height="1" fill="#000"/><rect x="10" y="4" width="1" height="1" fill="#000"/><rect x="11" y="4" width="1" height="1" fill="#FFFF00"/><rect x="12" y="4" width="1" height="1" fill="#fff"/><rect x="13" y="4" width="1" height="1" fill="#000"/><rect x="2" y="5" width="1" height="1" fill="#000"/><rect x="3" y="5" width="3" height="1" fill="#00FFFF"/><rect x="6" y="5" width="1" height="1" fill="#000"/><rect x="10" y="5" width="1" height="1" fill="#000"/><rect x="11" y="5" width="2" height="1" fill="#FFFF00"/><rect x="13" y="5" width="1" height="1" fill="#000"/><rect x="2" y="6" width="1" height="1" fill="#000"/><rect x="3" y="6" width="1" height="1" fill="#00FFFF"/><rect x="4" y="6" width="1" height="1" fill="#000"/><rect x="5" y="6" width="2" height="1" fill="#00FFFF"/><rect x="7" y="6" width="1" height="1" fill="#000"/><rect x="9" y="6" width="1" height="1" fill="#000"/><rect x="10" y="6" width="2" height="1" fill="#FFFF00"/><rect x="12" y="6" width="1" height="1" fill="#000"/><rect x="2" y="7" width="1" height="1" fill="#000"/><rect x="3" y="7" width="1" height="1" fill="#00FFFF"/><rect x="4" y="7" width="2" height="1" fill="#000"/><rect x="6" y="7" width="2" height="1" fill="#00FFFF"/><rect x="8" y="7" width="4" height="1" fill="#000"/><rect x="2" y="8" width="1" height="1" fill="#000"/><rect x="3" y="8" width="1" height="1" fill="#00FFFF"/><rect x="4" y="8" width="1" height="1" fill="#000"/><rect x="5" y="8" width="1" height="1" fill="#fff"/><rect x="6" y="8" width="2" height="1" fill="#000"/><rect x="8" y="8" width="1" height="1" fill="#00FFFF"/><rect x="9" y="8" width="2" height="1" fill="#000"/><rect x="2" y="9" width="1" height="1" fill="#000"/><rect x="3" y="9" width="1" height="1" fill="#00FFFF"/><rect x="4" y="9" width="5" height="1" fill="#000"/><rect x="9" y="9" width="1" height="1" fill="#00FFFF"/><rect x="10" y="9" width="1" height="1" fill="#000"/><rect x="2" y="10" width="1" height="1" fill="#000"/><rect x="3" y="10" width="8" height="1" fill="#00FFFF"/><rect x="11" y="10" width="1" height="1" fill="#000"/><rect x="1" y="11" width="15" height="1" fill="#000"/><rect x="1" y="12" width="2" height="1" fill="#000"/><rect x="3" y="12" width="1" height="1" fill="#fff"/><rect x="4" y="12" width="1" height="1" fill="#000"/><rect x="5" y="12" width="1" height="1" fill="#fff"/><rect x="6" y="12" width="1" height="1" fill="#000"/><rect x="7" y="12" width="1" height="1" fill="#fff"/><rect x="8" y="12" width="1" height="1" fill="#000"/><rect x="9" y="12" width="1" height="1" fill="#fff"/><rect x="10" y="12" width="1" height="1" fill="#000"/><rect x="11" y="12" width="1" height="1" fill="#fff"/><rect x="12" y="12" width="1" height="1" fill="#000"/><rect x="13" y="12" width="1" height="1" fill="#fff"/><rect x="14" y="12" width="2" height="1" fill="#000"/><rect x="1" y="13" width="1" height="1" fill="#000"/><rect x="2" y="13" width="13" height="1" fill="#fff"/><rect x="15" y="13" width="1" height="1" fill="#000"/><rect x="1" y="14" width="15" height="1" fill="#000"/></svg>
<svg style="left:21px;top:264px" width="5" height="9" viewBox="0 0 5 9"><rect x="0" y="0" width="1" height="1" fill="#008080"/><rect x="0" y="1" width="2" height="1" fill="#008080"/><rect x="0" y="2" width="3" height="1" fill="#008080"/><rect x="0" y="3" width="4" height="1" fill="#008080"/><rect x="0" y="4" width="5" height="1" fill="#008080"/><rect x="0" y="5" width="4" height="1" fill="#008080"/><rect x="0" y="6" width="3" height="1" fill="#008080"/><rect x="0" y="7" width="2" height="1" fill="#008080"/><rect x="0" y="8" width="1" height="1" fill="#008080"/></svg>
<div class="t" style="left:47px;top:258px;">(ПС) Проектная смета 29</div>
<div style="left:15px;top:280px;width:10px;height:1px;background:repeating-linear-gradient(to right,#A0A0A0 0 1px,transparent 1px 2px)"></div>
<svg style="left:10px;top:276px" width="9" height="9" viewBox="0 0 9 9"><rect x="0.5" y="0.5" width="8" height="8" fill="#fff" stroke="#A0A0A0"/><path d="M2 4.5h5" stroke="#000"/><path d="M4.5 2v5" stroke="#000"/></svg>
<svg style="left:24px;top:272px" width="16" height="15" viewBox="0 0 16 15"><rect x="12" y="0" width="3" height="1" fill="#000"/><rect x="2" y="1" width="1" height="1" fill="#000"/><rect x="12" y="1" width="1" height="1" fill="#000"/><rect x="13" y="1" width="2" height="1" fill="#FF0000"/><rect x="15" y="1" width="1" height="1" fill="#000"/><rect x="2" y="2" width="2" height="1" fill="#000"/><rect x="11" y="2" width="1" height="1" fill="#000"/><rect x="12" y="2" width="1" height="1" fill="#FFFF00"/><rect x="13" y="2" width="1" height="1" fill="#FF0000"/><rect x="14" y="2" width="1" height="1" fill="#000"/><rect x="2" y="3" width="1" height="1" fill="#000"/><rect x="3" y="3" width="1" height="1" fill="#00FFFF"/><rect x="4" y="3" width="1" height="1" fill="#000"/><rect x="11" y="3" width="1" height="1" fill="#000"/><rect x="12" y="3" width="1" height="1" fill="#FFFF00"/><rect x="13" y="3" width="1" height="1" fill="#fff"/><rect x="14" y="3" width="1" height="1" fill="#000"/><rect x="2" y="4" width="1" height="1" fill="#000"/><rect x="3" y="4" width="2" height="1" fill="#00FFFF"/><rect x="5" y="4" width="1" height="1" fill="#000"/><rect x="10" y="4" width="1" height="1" fill="#000"/><rect x="11" y="4" width="1" height="1" fill="#FFFF00"/><rect x="12" y="4" width="1" height="1" fill="#fff"/><rect x="13" y="4" width="1" height="1" fill="#000"/><rect x="2" y="5" width="1" height="1" fill="#000"/><rect x="3" y="5" width="3" height="1" fill="#00FFFF"/><rect x="6" y="5" width="1" height="1" fill="#000"/><rect x="10" y="5" width="1" height="1" fill="#000"/><rect x="11" y="5" width="2" height="1" fill="#FFFF00"/><rect x="13" y="5" width="1" height="1" fill="#000"/><rect x="2" y="6" width="1" height="1" fill="#000"/><rect x="3" y="6" width="1" height="1" fill="#00FFFF"/><rect x="4" y="6" width="1" height="1" fill="#000"/><rect x="5" y="6" width="2" height="1" fill="#00FFFF"/><rect x="7" y="6" width="1" height="1" fill="#000"/><rect x="9" y="6" width="1" height="1" fill="#000"/><rect x="10" y="6" width="2" height="1" fill="#FFFF00"/><rect x="12" y="6" width="1" height="1" fill="#000"/><rect x="2" y="7" width="1" height="1" fill="#000"/><rect x="3" y="7" width="1" height="1" fill="#00FFFF"/><rect x="4" y="7" width="2" height="1" fill="#000"/><rect x="6" y="7" width="2" height="1" fill="#00FFFF"/><rect x="8" y="7" width="4" height="1" fill="#000"/><rect x="2" y="8" width="1" height="1" fill="#000"/><rect x="3" y="8" width="1" height="1" fill="#00FFFF"/><rect x="4" y="8" width="1" height="1" fill="#000"/><rect x="5" y="8" width="1" height="1" fill="#fff"/><rect x="6" y="8" width="2" height="1" fill="#000"/><rect x="8" y="8" width="1" height="1" fill="#00FFFF"/><rect x="9" y="8" width="2" height="1" fill="#000"/><rect x="2" y="9" width="1" height="1" fill="#000"/><rect x="3" y="9" width="1" height="1" fill="#00FFFF"/><rect x="4" y="9" width="5" height="1" fill="#000"/><rect x="9" y="9" width="1" height="1" fill="#00FFFF"/><rect x="10" y="9" width="1" height="1" fill="#000"/><rect x="2" y="10" width="1" height="1" fill="#000"/><rect x="3" y="10" width="8" height="1" fill="#00FFFF"/><rect x="11" y="10" width="1" height="1" fill="#000"/><rect x="1" y="11" width="15" height="1" fill="#000"/><rect x="1" y="12" width="2" height="1" fill="#000"/><rect x="3" y="12" width="1" height="1" fill="#fff"/><rect x="4" y="12" width="1" height="1" fill="#000"/><rect x="5" y="12" width="1" height="1" fill="#fff"/><rect x="6" y="12" width="1" height="1" fill="#000"/><rect x="7" y="12" width="1" height="1" fill="#fff"/><rect x="8" y="12" width="1" height="1" fill="#000"/><rect x="9" y="12" width="1" height="1" fill="#fff"/><rect x="10" y="12" width="1" height="1" fill="#000"/><rect x="11" y="12" width="1" height="1" fill="#fff"/><rect x="12" y="12" width="1" height="1" fill="#000"/><rect x="13" y="12" width="1" height="1" fill="#fff"/><rect x="14" y="12" width="2" height="1" fill="#000"/><rect x="1" y="13" width="1" height="1" fill="#000"/><rect x="2" y="13" width="13" height="1" fill="#fff"/><rect x="15" y="13" width="1" height="1" fill="#000"/><rect x="1" y="14" width="15" height="1" fill="#000"/></svg>
<svg style="left:21px;top:280px" width="5" height="9" viewBox="0 0 5 9"><rect x="0" y="0" width="1" height="1" fill="#008080"/><rect x="0" y="1" width="2" height="1" fill="#008080"/><rect x="0" y="2" width="3" height="1" fill="#008080"/><rect x="0" y="3" width="4" height="1" fill="#008080"/><rect x="0" y="4" width="5" height="1" fill="#008080"/><rect x="0" y="5" width="4" height="1" fill="#008080"/><rect x="0" y="6" width="3" height="1" fill="#008080"/><rect x="0" y="7" width="2" height="1" fill="#008080"/><rect x="0" y="8" width="1" height="1" fill="#008080"/></svg>
<div class="t" style="left:47px;top:274px;">(ПС) Проектная смета 16 (для Газпрома)</div>
</div>
<div style="left:8px;top:562px;width:211px;height:16px;background:#F5F4EC"></div>
<div style="left:8px;top:562px;width:16px;height:16px;background:#ECE9D8;border-top:1px solid #ECE9D8;border-left:1px solid #ECE9D8;border-right:1px solid #716F64;border-bottom:1px solid #716F64;box-sizing:border-box;box-shadow:inset 1px 1px 0 #fff, inset -1px -1px 0 #BFB47C"></div>
<svg style="left:8px;top:562px" width="16" height="16" viewBox="0 0 16 16"><path d="M5 8l4-4v8z" fill="#000"/></svg>
<div style="left:28px;top:562px;width:73px;height:16px;background:#ECE9D8;border-top:1px solid #ECE9D8;border-left:1px solid #ECE9D8;border-right:1px solid #716F64;border-bottom:1px solid #716F64;box-sizing:border-box;box-shadow:inset 1px 1px 0 #fff, inset -1px -1px 0 #BFB47C"></div>
<div style="left:203px;top:562px;width:16px;height:16px;background:#ECE9D8;border-top:1px solid #ECE9D8;border-left:1px solid #ECE9D8;border-right:1px solid #716F64;border-bottom:1px solid #716F64;box-sizing:border-box;box-shadow:inset 1px 1px 0 #fff, inset -1px -1px 0 #BFB47C"></div>
<svg style="left:203px;top:562px" width="16" height="16" viewBox="0 0 16 16"><path d="M11 8l-4-4v8z" fill="#000"/></svg>
<div style="left:2px;top:586px;width:150px;height:12px;border-top:1px solid #BFB47C;border-left:1px solid #BFB47C;border-right:1px solid #fff;box-sizing:border-box"></div>
<div style="left:154px;top:586px;width:658px;height:12px;border-top:1px solid #BFB47C;border-left:1px solid #BFB47C;box-sizing:border-box"></div>
<div class="t" style="left:158px;top:589px;">Всего Локальных смет: 8</div>
<div class="t" style="right:497px;top:105px;text-align:right;letter-spacing:-0.25px">Наименование</div>
<div class="t" style="right:497px;top:118px;text-align:right;">сметы</div>
<div style="left:326px;top:105px;width:482px;height:47px;background:#F0F0EE;border:1px solid #BFB47C;box-sizing:border-box"></div>
<div class="t" style="left:326px;top:106px;">Смета-экспертиза 7</div>
<div class="t" style="right:493px;top:160px;text-align:right;">Шифр</div>
<div style="left:331px;top:157px;width:155px;height:19px;background:#F0F0EE;border:1px solid #BFB47C;box-sizing:border-box"></div>
<div class="t" style="left:333px;top:160px;">СЭ7-12/1</div>
<div class="t" style="right:493px;top:189px;text-align:right;">Стадия</div>
<div style="left:331px;top:185px;width:155px;height:19px;background:#F0F0EE;border:1px solid #BFB47C;box-sizing:border-box"></div>
<div class="t" style="left:332px;top:189px;letter-spacing:0.45px">Проект</div>
<div class="t" style="right:237px;top:160px;text-align:right;">Дата создания</div>
<div style="left:582px;top:155px;width:76px;height:23px;background:#ECE9D8;border:1px solid #BFB47C;box-sizing:border-box"></div>
<div class="t" style="left:586px;top:160px;letter-spacing:0.2px">16.10.2012</div>
<div class="t" style="right:237px;top:188px;text-align:right;">Дата изменения</div>
<div style="left:582px;top:183px;width:76px;height:23px;background:#ECE9D8;border:1px solid #BFB47C;box-sizing:border-box"></div>
<div class="t" style="left:586px;top:188px;letter-spacing:0.2px">17.07.2013</div>
<div class="t" style="left:675px;top:160px;">В ценах на</div>
<div style="left:736px;top:157px;width:79px;height:19px;background:#F0F0EE;border:1px solid #BFB47C;box-sizing:border-box"></div>
<div style="left:812px;top:157px;width:1px;height:19px;background:#FCFBF5"></div>
<div style="left:238px;top:230px;width:282px;height:194px;border:1px solid #0B55E8;box-sizing:border-box"></div>
<div style="left:244px;top:228px;width:61px;height:5px;background:#ECE9D8"></div>
<div class="t" style="left:248px;top:225px;letter-spacing:-0.22px">Стоимость</div>
<div style="left:530px;top:230px;width:283px;height:192px;border:1px solid #0B55E8;box-sizing:border-box"></div>
<div style="left:536px;top:228px;width:50px;height:5px;background:#ECE9D8"></div>
<div class="t" style="left:540px;top:225px;letter-spacing:0px">Договор</div>
<div style="left:238px;top:439px;width:282px;height:125px;border:1px solid #0B55E8;box-sizing:border-box"></div>
<div style="left:244px;top:437px;width:45px;height:5px;background:#ECE9D8"></div>
<div class="t" style="left:248px;top:434px;letter-spacing:0px">Расчёт</div>
<div style="left:530px;top:437px;width:283px;height:127px;border:1px solid #0B55E8;box-sizing:border-box"></div>
<div style="left:536px;top:435px;width:73px;height:5px;background:#ECE9D8"></div>
<div class="t" style="left:540px;top:432px;letter-spacing:-0.14px">Организации</div>
<div style="left:239px;top:242px;width:280px;height:19px;border:1px solid #000;box-sizing:border-box"></div>
<div style="left:332px;top:242px;width:1px;height:19px;background:#000"></div>
<div style="left:406px;top:242px;width:1px;height:19px;background:#000"></div>
<div style="left:240px;top:243px;width:92px;height:1px;background:#fff"></div>
<div style="left:240px;top:243px;width:1px;height:17px;background:#fff"></div>
<div style="left:333px;top:243px;width:73px;height:1px;background:#fff"></div>
<div style="left:333px;top:243px;width:1px;height:17px;background:#fff"></div>
<div style="left:407px;top:243px;width:111px;height:1px;background:#fff"></div>
<div style="left:407px;top:243px;width:1px;height:17px;background:#fff"></div>
<div class="t" style="left:333px;top:246px;width:73px;text-align:center">По смете</div>
<div class="t" style="left:407px;top:246px;width:111px;text-align:center;letter-spacing:-0.25px">С начислением НДС</div>
<div style="left:333px;top:261px;width:73px;height:17px;background:#F2CDAB"></div>
<div style="left:407px;top:261px;width:111px;height:17px;background:#F2CDAB"></div>
<div style="left:239px;top:278px;width:280px;height:1px;background:#BFB47C"></div>
<div class="t" style="right:485px;top:264px;text-align:right;"><b style='letter-spacing:0.4px'>Всего</b></div>
<div class="t" style="right:410px;top:264px;text-align:right;">2 060 226,74</div>
<div class="t" style="right:299px;top:264px;text-align:right;">2 431 067,55</div>
<div style="left:239px;top:296px;width:280px;height:1px;background:#BFB47C"></div>
<div class="t" style="right:485px;top:282px;text-align:right;">Проектные</div>
<div class="t" style="right:410px;top:282px;text-align:right;">0,00</div>
<div class="t" style="right:299px;top:282px;text-align:right;">0,00</div>
<div style="left:333px;top:297px;width:73px;height:17px;background:#C6DEC4"></div>
<div style="left:407px;top:297px;width:111px;height:17px;background:#C6DEC4"></div>
<div style="left:239px;top:314px;width:280px;height:1px;background:#BFB47C"></div>
<div class="t" style="right:485px;top:300px;text-align:right;">Изыскательские</div>
<div class="t" style="right:410px;top:300px;text-align:right;">0,00</div>
<div class="t" style="right:299px;top:300px;text-align:right;">0,00</div>
<div style="left:239px;top:332px;width:280px;height:1px;background:#BFB47C"></div>
<div class="t" style="right:485px;top:318px;text-align:right;">Полевые</div>
<div class="t" style="right:410px;top:318px;text-align:right;">0,00</div>
<div class="t" style="right:299px;top:318px;text-align:right;">0,00</div>
<div style="left:333px;top:333px;width:73px;height:17px;background:#C6DEC4"></div>
<div style="left:407px;top:333px;width:111px;height:17px;background:#C6DEC4"></div>
<div style="left:239px;top:350px;width:280px;height:1px;background:#BFB47C"></div>
<div class="t" style="right:485px;top:336px;text-align:right;">Лабораторные</div>
<div class="t" style="right:410px;top:336px;text-align:right;">0,00</div>
<div class="t" style="right:299px;top:336px;text-align:right;">0,00</div>
<div style="left:239px;top:368px;width:280px;height:1px;background:#BFB47C"></div>
<div class="t" style="right:485px;top:354px;text-align:right;">Камеральные</div>
<div class="t" style="right:410px;top:354px;text-align:right;">0,00</div>
<div class="t" style="right:299px;top:354px;text-align:right;">0,00</div>
<div style="left:333px;top:369px;width:73px;height:17px;background:#C6DEC4"></div>
<div style="left:407px;top:369px;width:111px;height:17px;background:#C6DEC4"></div>
<div style="left:239px;top:386px;width:280px;height:1px;background:#BFB47C"></div>
<div class="t" style="right:485px;top:372px;text-align:right;">Изыскат. прочие</div>
<div class="t" style="right:410px;top:372px;text-align:right;">0,00</div>
<div class="t" style="right:299px;top:372px;text-align:right;">0,00</div>
<div style="left:239px;top:404px;width:280px;height:1px;background:#BFB47C"></div>
<div class="t" style="right:485px;top:390px;text-align:right;">Обследования</div>
<div class="t" style="right:410px;top:390px;text-align:right;">0,00</div>
<div class="t" style="right:299px;top:390px;text-align:right;">0,00</div>
<div style="left:333px;top:405px;width:73px;height:17px;background:#C6DEC4"></div>
<div style="left:407px;top:405px;width:111px;height:17px;background:#C6DEC4"></div>
<div style="left:239px;top:422px;width:280px;height:1px;background:#BFB47C"></div>
<div class="t" style="right:485px;top:408px;text-align:right;">НДС</div>
<div class="t" style="right:299px;top:408px;text-align:right;">370 840,81</div>
<div style="left:332px;top:261px;width:1px;height:162px;background:#BFB47C"></div>
<div style="left:406px;top:261px;width:1px;height:162px;background:#BFB47C"></div>
<div style="left:518px;top:261px;width:1px;height:162px;background:#BFB47C"></div>
<div class="t" style="right:206px;top:248px;text-align:right;letter-spacing:-0.4px">Номер</div>
<div style="left:617px;top:243px;width:32px;height:19px;background:#F0F0EE;border:1px solid #BFB47C;box-sizing:border-box"></div>
<div class="t" style="left:619px;top:247px;width:28px;overflow:hidden">Договор</div>
<div class="t" style="left:652px;top:247px;">№ прил.</div>
<div style="left:699px;top:243px;width:32px;height:19px;background:#F0F0EE;border:1px solid #BFB47C;box-sizing:border-box"></div>
<div style="left:740px;top:242px;width:69px;height:21px;border:1px solid #BFB47C;box-sizing:border-box"></div>
<div class="t" style="left:740px;top:246px;width:69px;text-align:center;color:#BDB27A;text-shadow:1px 1px 0 #fff">Выбрать</div>
<div class="t" style="right:206px;top:272px;text-align:right;">Дата</div>
<div style="left:617px;top:270px;width:28px;height:19px;background:#ECE9D8;border:1px solid #BFB47C;box-sizing:border-box"></div>
<div class="t" style="left:619px;top:272px;width:10px;overflow:hidden;background:#F0F0EE;height:15px;line-height:13px;padding-top:2px;box-sizing:border-box">14.10.2012</div>
<svg style="left:629px;top:271px" width="14" height="17" viewBox="0 0 14 17"><path d="M3 7h7l-3.5 4z" fill="#000"/></svg>
<div class="t" style="left:648px;top:273px;">начала</div>
<div style="left:687px;top:270px;width:28px;height:19px;background:#ECE9D8;border:1px solid #BFB47C;box-sizing:border-box"></div>
<div class="t" style="left:689px;top:272px;width:10px;overflow:hidden;background:#F0F0EE;height:15px;line-height:13px;padding-top:2px;box-sizing:border-box">10.10.2012</div>
<svg style="left:699px;top:271px" width="14" height="17" viewBox="0 0 14 17"><path d="M3 7h7l-3.5 4z" fill="#000"/></svg>
<div class="t" style="left:718px;top:273px;">окончания</div>
<div style="left:775px;top:270px;width:33px;height:19px;background:#ECE9D8;border:1px solid #BFB47C;box-sizing:border-box"></div>
<div class="t" style="left:777px;top:272px;width:15px;overflow:hidden;background:#F0F0EE;height:15px;line-height:13px;padding-top:2px;box-sizing:border-box">15.12.2012</div>
<svg style="left:792px;top:271px" width="14" height="17" viewBox="0 0 14 17"><path d="M3 7h7l-3.5 4z" fill="#000"/></svg>
<div class="t" style="right:206px;top:295px;text-align:right;">ГИП</div>
<div style="left:617px;top:292px;width:193px;height:19px;background:#F0F0EE;border:1px solid #BFB47C;box-sizing:border-box"></div>
<div class="t" style="left:618px;top:295px;letter-spacing:-0.35px">Смирнов П.П.</div>
<div class="t" style="right:206px;top:316px;text-align:right;">Бюро ГИП</div>
<div style="left:617px;top:313px;width:193px;height:19px;background:#F0F0EE;border:1px solid #BFB47C;box-sizing:border-box"></div>
<div class="t" style="left:618px;top:316px;letter-spacing:0.15px">Отдел № 9</div>
<div class="t" style="right:206px;top:337px;text-align:right;">Состояние</div>
<div style="left:617px;top:334px;width:30px;height:19px;background:#F0F0EE;border:1px solid #BFB47C;box-sizing:border-box"></div>
<div class="t" style="left:657px;top:337px;">Тип</div>
<div style="left:678px;top:334px;width:30px;height:19px;background:#F0F0EE;border:1px solid #BFB47C;box-sizing:border-box"></div>
<div class="t" style="left:680px;top:338px;width:27px;overflow:hidden">Договор</div>
<div class="t" style="left:717px;top:338px;">По оплате</div>
<div style="left:773px;top:334px;width:35px;height:19px;background:#ECE9D8;border:1px solid #BFB47C;box-sizing:border-box"></div>
<div class="t" style="left:775px;top:336px;width:17px;overflow:hidden;background:#F0F0EE;height:15px;line-height:13px;padding-top:2px;box-sizing:border-box"><span style='margin-left:-2px'>5%</span></div>
<svg style="left:792px;top:335px" width="14" height="17" viewBox="0 0 14 17"><path d="M3 7h7l-3.5 4z" fill="#000"/></svg>
<div class="t" style="right:206px;top:359px;text-align:right;letter-spacing:-0.25px">Наименование</div>
<div class="t" style="right:206px;top:371px;text-align:right;">договора</div>
<div style="left:617px;top:357px;width:191px;height:60px;background:#F0F0EE;border:1px solid #BFB47C;box-sizing:border-box"></div>
<div class="t" style="left:619px;top:360px;">Строительство здания</div>
<div class="t" style="left:619px;top:373px;">теплоцентра</div>
<div style="left:791px;top:358px;width:16px;height:58px;background:repeating-conic-gradient(#ECE9D8 0 25%, #F7F6EF 0 50%) 0 0/2px 2px"></div>
<div style="left:791px;top:358px;width:16px;height:16px;background:#ECE9D8;border:1px solid #BFB47C;box-sizing:border-box;box-shadow:inset 1px 1px 0 #fff"></div>
<div style="left:791px;top:400px;width:16px;height:16px;background:#ECE9D8;border:1px solid #BFB47C;box-sizing:border-box;box-shadow:inset 1px 1px 0 #fff"></div>
<svg style="left:791px;top:358px" width="16" height="16"><path d="M4 10h8l-4-4z" fill="#BDB380"/></svg>
<svg style="left:791px;top:400px" width="16" height="16"><path d="M4 6h8l-4 4z" fill="#BDB380"/></svg>
<div class="t" style="right:451px;top:456px;text-align:right;">Множитель стоимости</div>
<div style="left:370px;top:452px;width:144px;height:19px;background:#F0F0EE;border:1px solid #BFB47C;box-sizing:border-box"></div>
<div class="t" style="left:372px;top:456px;">Руб.</div>
<div class="t" style="right:451px;top:478px;text-align:right;">Параметр округления</div>
<div class="t" style="right:451px;top:491px;text-align:right;">(не действует на НДС)</div>
<div style="left:373px;top:481px;width:142px;height:19px;background:#F0F0EE;border:1px solid #BFB47C;box-sizing:border-box"></div>
<div class="t" style="left:375px;top:485px;letter-spacing:0.15px">До 2-х знаков</div>
<div style="left:249px;top:529px;width:11px;height:11px;background:#fff;border:1px solid #BFB47C;box-sizing:border-box"></div>
<div class="t" style="left:266px;top:523px;letter-spacing:0.07px">Расчет итогов по составу и исполнителям с</div>
<div class="t" style="left:266px;top:536px;letter-spacing:0.2px">учетом концевика</div>
<div class="t" style="right:205px;top:452.0px;text-align:right;letter-spacing:-0.25px">Наименование</div>
<div class="t" style="right:205px;top:464.7px;text-align:right;">проектной</div>
<div class="t" style="right:205px;top:477.4px;text-align:right;">(изыскат.)</div>
<div class="t" style="right:205px;top:490.1px;text-align:right;">организации</div>
<div class="t" style="right:205px;top:511.0px;text-align:right;letter-spacing:-0.25px">Наименование</div>
<div class="t" style="right:205px;top:523.5px;text-align:right;">организации</div>
<div class="t" style="right:205px;top:536.0px;text-align:right;">заказчика</div>
<div style="left:617px;top:450px;width:165px;height:56px;background:#F0F0EE;border:1px solid #BFB47C;box-sizing:border-box"></div>
<div class="t" style="left:619px;top:453px;">ЗАО "ИнвестГаз"</div>
<div style="left:765px;top:451px;width:16px;height:54px;background:repeating-conic-gradient(#ECE9D8 0 25%, #F7F6EF 0 50%) 0 0/2px 2px"></div>
<div style="left:765px;top:451px;width:16px;height:16px;background:#ECE9D8;border:1px solid #BFB47C;box-sizing:border-box;box-shadow:inset 1px 1px 0 #fff"></div>
<div style="left:765px;top:489px;width:16px;height:16px;background:#ECE9D8;border:1px solid #BFB47C;box-sizing:border-box;box-shadow:inset 1px 1px 0 #fff"></div>
<svg style="left:765px;top:451px" width="16" height="16"><path d="M4 10h8l-4-4z" fill="#BDB380"/></svg>
<svg style="left:765px;top:489px" width="16" height="16"><path d="M4 6h8l-4 4z" fill="#BDB380"/></svg>
<div style="left:617px;top:509px;width:165px;height:51px;background:#F0F0EE;border:1px solid #BFB47C;box-sizing:border-box"></div>
<div class="t" style="left:619px;top:512px;">ОАО "Гипрогаз"</div>
<div style="left:765px;top:510px;width:16px;height:49px;background:repeating-conic-gradient(#ECE9D8 0 25%, #F7F6EF 0 50%) 0 0/2px 2px"></div>
<div style="left:765px;top:510px;width:16px;height:16px;background:#ECE9D8;border:1px solid #BFB47C;box-sizing:border-box;box-shadow:inset 1px 1px 0 #fff"></div>
<div style="left:765px;top:543px;width:16px;height:16px;background:#ECE9D8;border:1px solid #BFB47C;box-sizing:border-box;box-shadow:inset 1px 1px 0 #fff"></div>
<svg style="left:765px;top:510px" width="16" height="16"><path d="M4 10h8l-4-4z" fill="#BDB380"/></svg>
<svg style="left:765px;top:543px" width="16" height="16"><path d="M4 6h8l-4 4z" fill="#BDB380"/></svg>
<div style="left:786px;top:486px;width:21px;height:21px;border:1px solid #BFB47C;box-sizing:border-box;box-shadow:inset 1px 1px 0 #fff"></div>
<div style="left:786px;top:506px;width:21px;height:15px;border:1px solid #BFB47C;box-sizing:border-box;box-shadow:inset 1px 1px 0 #fff"></div>
<svg style="left:786px;top:486px" width="21" height="35" shape-rendering="crispEdges"><path d="M5 13.5h2M9 13.5h2M12 13.5h2M5 27.5h2M9 27.5h2M12 27.5h2" stroke="#B8AE80"/></svg>
<div style="left:225px;top:236px;width:8px;height:162px;background:#ECE9D8;border:1px solid #BFB47C;box-sizing:border-box;box-shadow:inset 1px 1px 0 #fff"></div>
<svg style="left:225px;top:236px" width="8" height="162"><path d="M6 6l-3 3.5l3 3.5" fill="none" stroke="#000" stroke-width="1.4"/><path d="M6 150l-3 3.5l3 3.5" fill="none" stroke="#000" stroke-width="1.4"/></svg>
<div style="left:229px;top:252px;width:1px;height:131px;background:repeating-linear-gradient(to bottom,#0B55E8 0 1px,transparent 1px 3px)"></div>
<div style="left:521px;top:309px;width:8px;height:171px;background:#ECE9D8;border:1px solid #BFB47C;box-sizing:border-box;box-shadow:inset 1px 1px 0 #fff"></div>
<svg style="left:521px;top:309px" width="8" height="171"><path d="M6 6l-3 3.5l3 3.5" fill="none" stroke="#000" stroke-width="1.4"/><path d="M6 159l-3 3.5l3 3.5" fill="none" stroke="#000" stroke-width="1.4"/></svg>
<div style="left:525px;top:325px;width:1px;height:140px;background:repeating-linear-gradient(to bottom,#0B55E8 0 1px,transparent 1px 3px)"></div>
<div style="left:438px;top:576px;width:176px;height:8px;background:#F8F7F0;border:1px solid #BFB47C;box-sizing:border-box"></div>
<svg style="left:438px;top:576px" width="176" height="8"><path d="M6 6l3-3l3 3M164 6l3-3l3 3" fill="none" stroke="#000" stroke-width="1.4"/></svg>
<div style="left:454px;top:580px;width:146px;height:1px;background:repeating-linear-gradient(to right,#0B55E8 0 1px,transparent 1px 3px)"></div>
</div></body></html>
